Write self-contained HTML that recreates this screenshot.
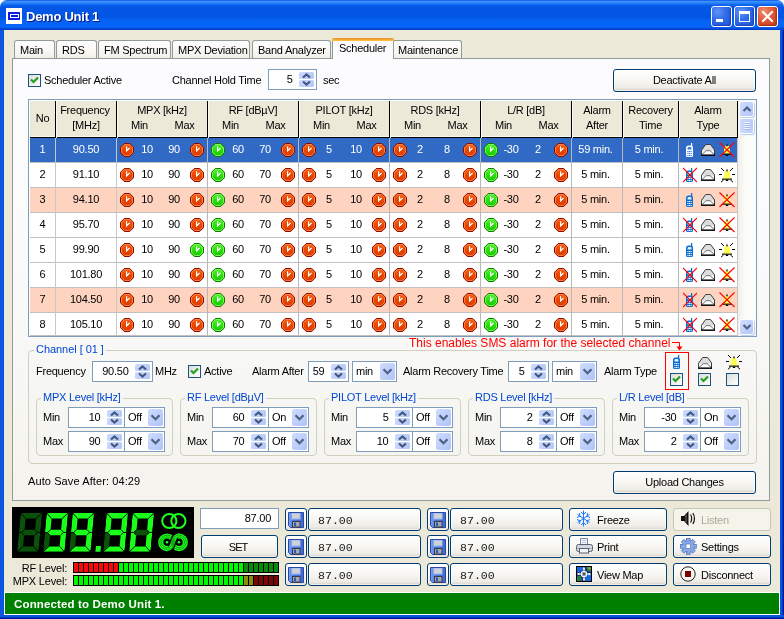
<!DOCTYPE html><html><head><meta charset="utf-8"><title>Demo Unit 1</title><style>
*{box-sizing:border-box;margin:0;padding:0}
html,body{width:784px;height:619px;overflow:hidden;background:#fff}
body{font-family:"Liberation Sans",sans-serif;font-size:11px;letter-spacing:-0.25px;color:#000}
#win{will-change:transform;position:absolute;left:0;top:0;width:784px;height:619px;overflow:hidden;border-radius:7px 7px 0 0;background:#ece9d8}
.a{position:absolute;white-space:nowrap}
#tbar{left:0;top:0;width:784px;height:30px;background:linear-gradient(180deg,#0a50e0 0,#3b92ff 5%,#2a84fa 10%,#0a60ec 17%,#0457e6 24%,#0355e4 60%,#0460f2 65%,#0666fa 88%,#0452e2 94%,#0238c8 100%)}
#tbar .ttl{left:26px;top:9px;font-size:13px;font-weight:bold;color:#fff;text-shadow:1px 1px 0 #0a1883;letter-spacing:-0.25px;line-height:16px}
.bl{left:0;top:30px;width:4px;height:589px;background:linear-gradient(90deg,#0831d9 0,#166aee 1px,#0855dd 2px,#0855dd 4px)}
.br{left:780px;top:30px;width:4px;height:589px;background:linear-gradient(90deg,#0855dd 0,#0855dd 2px,#001ea0 3px,#00138c 4px)}
.bb{left:0;top:615px;width:784px;height:4px;background:linear-gradient(180deg,#0855dd 0,#0855dd 2px,#001ea0 3px,#00138c 4px)}
.cb{top:6px;width:21px;height:21px;border:1px solid #fff;border-radius:3px;background:radial-gradient(circle at 30% 25%,#5e93f5 0,#2f6be8 45%,#2355d8 100%);box-shadow:inset -1px -1px 2px #1a3eb0}
.cb.x{background:radial-gradient(circle at 30% 25%,#f0906e 0,#e2583a 45%,#c63a17 100%);box-shadow:inset -1px -1px 2px #9c2a10}
.tab{top:40px;height:19px;border:1px solid #919b9c;border-bottom:none;border-radius:3px 3px 0 0;background:linear-gradient(180deg,#fefefe 0,#f6f5f0 70%,#ecebe3 100%);text-align:left;padding-left:5px;line-height:18px}
.tab.sel{top:38px;height:21px;background:#fcfcfe;border-top:none;line-height:21px;z-index:3;padding-left:6px}
.tab.sel:before{content:"";position:absolute;left:-1px;right:-1px;top:0;height:3px;background:linear-gradient(180deg,#e68b2c,#ffc73c);border-radius:3px 3px 0 0}
#pane{left:12px;top:58px;width:758px;height:443px;border:1px solid #919b9c;background:linear-gradient(180deg,#fcfcfe 0,#fbfbfc 40%,#f4f3ee 100%)}
.btn{border:1px solid #003c74;border-radius:3px;background:linear-gradient(180deg,#fff 0,#f7f6f1 50%,#ecebe5 85%,#d6d0c5 100%);text-align:center;box-shadow:inset 0 0 0 1px rgba(255,255,255,.6)}
.btn.dis{border-color:#c9c7ba;color:#aca899;background:#f5f4ea;box-shadow:none}
.fld{border:1px solid #7f9db9;background:#fff}
.spn{border:1px solid #7f9db9;background:#fff}
.spn .v{position:absolute;right:23.5px;top:0;line-height:19px;text-align:right}
.spn .u,.spn .d{position:absolute;right:2px;width:15px;height:7px;background:linear-gradient(135deg,#cddbfe,#b2c5f6);border-radius:1.5px}
.spn .u{top:2px}.spn .d{bottom:2px}
.cmb{border:1px solid #7f9db9;background:#fff}
.cmb .v{position:absolute;left:3px;top:0;line-height:19px}
.cmb .dd{position:absolute;right:1px;top:1px;width:15px;bottom:1px;border-radius:2px;background:linear-gradient(135deg,#cfdcfe,#afc3f6)}
.grp{border:1px solid #d0d0bf;border-radius:4px}
.gt{color:#0046d5;line-height:13px;padding:0 2px}
.chk{width:13px;height:13px;border:1px solid #1c5180;background:linear-gradient(135deg,#dcdcd7 0,#fff 100%)}
table{border-collapse:collapse}
</style></head><body><div id="win">
<div id="tbar" class="a">
<svg class="a" style="left:6px;top:8px" width="16" height="16" viewBox="0 0 16 16"><rect width="16" height="16" fill="#fff"/><rect x="2" y="4" width="12" height="8" fill="#0c1ce0"/><rect x="4.5" y="6.5" width="8" height="3" fill="none" stroke="#fff"/></svg>
<div class="a ttl">Demo Unit 1</div>
<div class="a cb" style="left:711px"><svg width="19" height="19"><rect x="4" y="12" width="7" height="3" fill="#fff"/></svg></div>
<div class="a cb" style="left:734px"><svg width="19" height="19"><rect x="4.5" y="5.5" width="10" height="9" fill="none" stroke="#fff"/><rect x="4" y="4" width="11" height="3" fill="#fff"/></svg></div>
<div class="a cb x" style="left:757px"><svg width="19" height="19"><path d="M5 5 L14 14 M14 5 L5 14" stroke="#fff" stroke-width="2.2" stroke-linecap="round"/></svg></div>
</div>
<div class="a bl"></div><div class="a br"></div><div class="a bb"></div>
<div class="a tab" style="left:14px;width:41px">Main</div>
<div class="a tab" style="left:56px;width:41px">RDS</div>
<div class="a tab" style="left:98px;width:73px">FM Spectrum</div>
<div class="a tab" style="left:172px;width:78px">MPX Deviation</div>
<div class="a tab" style="left:252px;width:79px">Band Analyzer</div>
<div class="a tab sel" style="left:332px;width:62px">Scheduler</div>
<div class="a tab" style="left:392px;width:70px">Maintenance</div>
<div id="pane" class="a"></div>
<div class="a chk" style="left:28px;top:74px"><svg width="11" height="11" style="display:block"><path d="M2 4.5 L4.5 7 L9 2.5" fill="none" stroke="#21a121" stroke-width="2.2"/></svg></div>
<div class="a" style="left:44px;top:74px;line-height:13px;">Scheduler Active</div>
<div class="a" style="left:172px;top:74px;line-height:13px;">Channel Hold Time</div>
<div class="a spn" style="left:268px;top:69px;width:49px;height:21px"><div class="v">5</div><div class="u"><svg width="15" height="7" style="display:block"><path d="M4 5.6 L7.5 2.4 L11 5.6" fill="none" stroke="#43577c" stroke-width="2.1"/></svg></div><div class="d"><svg width="15" height="7" style="display:block"><path d="M4 1.4 L7.5 4.6 L11 1.4" fill="none" stroke="#43577c" stroke-width="2.1"/></svg></div></div>
<div class="a" style="left:323px;top:74px;line-height:13px;">sec</div>
<div class="a btn" style="left:613px;top:69px;width:143px;height:23px;line-height:21px">Deactivate All</div>
<div class="a" style="left:28px;top:99px;width:729px;height:238px;border:1px solid #7f9db9;background:#fff"></div>
<div class="a" style="left:30px;top:101px;width:708px;height:37px;background:#ece9d8;border-bottom:1px solid #000;box-shadow:inset 0 -1px 0 #fbfaf0"></div>
<div class="a" style="left:55px;top:101px;width:2px;height:37px;background:#000;border-right:1px solid #fbfaf0"></div>
<div class="a" style="left:116px;top:101px;width:2px;height:37px;background:#000;border-right:1px solid #fbfaf0"></div>
<div class="a" style="left:207px;top:101px;width:2px;height:37px;background:#000;border-right:1px solid #fbfaf0"></div>
<div class="a" style="left:298px;top:101px;width:2px;height:37px;background:#000;border-right:1px solid #fbfaf0"></div>
<div class="a" style="left:389px;top:101px;width:2px;height:37px;background:#000;border-right:1px solid #fbfaf0"></div>
<div class="a" style="left:480px;top:101px;width:2px;height:37px;background:#000;border-right:1px solid #fbfaf0"></div>
<div class="a" style="left:571px;top:101px;width:2px;height:37px;background:#000;border-right:1px solid #fbfaf0"></div>
<div class="a" style="left:622px;top:101px;width:2px;height:37px;background:#000;border-right:1px solid #fbfaf0"></div>
<div class="a" style="left:678px;top:101px;width:2px;height:37px;background:#000;border-right:1px solid #fbfaf0"></div>
<div class="a" style="left:737px;top:101px;width:2px;height:37px;background:#000;border-right:1px solid #fbfaf0"></div>
<div class="a" style="left:30px;top:112px;width:25px;text-align:center;line-height:13px">No</div>
<div class="a" style="left:55px;top:104px;width:60px;text-align:center;line-height:13px">Frequency</div>
<div class="a" style="left:56px;top:119px;width:60px;text-align:center;line-height:13px">[MHz]</div>
<div class="a" style="left:117px;top:104px;width:90px;text-align:center;line-height:13px">MPX [kHz]</div>
<div class="a" style="left:117px;top:119px;width:45px;text-align:center;line-height:13px">Min</div>
<div class="a" style="left:162px;top:119px;width:45px;text-align:center;line-height:13px">Max</div>
<div class="a" style="left:208px;top:104px;width:90px;text-align:center;line-height:13px">RF [dBµV]</div>
<div class="a" style="left:208px;top:119px;width:45px;text-align:center;line-height:13px">Min</div>
<div class="a" style="left:253px;top:119px;width:45px;text-align:center;line-height:13px">Max</div>
<div class="a" style="left:299px;top:104px;width:90px;text-align:center;line-height:13px">PILOT [kHz]</div>
<div class="a" style="left:299px;top:119px;width:45px;text-align:center;line-height:13px">Min</div>
<div class="a" style="left:344px;top:119px;width:45px;text-align:center;line-height:13px">Max</div>
<div class="a" style="left:390px;top:104px;width:90px;text-align:center;line-height:13px">RDS [kHz]</div>
<div class="a" style="left:390px;top:119px;width:45px;text-align:center;line-height:13px">Min</div>
<div class="a" style="left:435px;top:119px;width:45px;text-align:center;line-height:13px">Max</div>
<div class="a" style="left:481px;top:104px;width:90px;text-align:center;line-height:13px">L/R [dB]</div>
<div class="a" style="left:481px;top:119px;width:45px;text-align:center;line-height:13px">Min</div>
<div class="a" style="left:526px;top:119px;width:45px;text-align:center;line-height:13px">Max</div>
<div class="a" style="left:572px;top:104px;width:50px;text-align:center;line-height:13px">Alarm</div>
<div class="a" style="left:572px;top:119px;width:50px;text-align:center;line-height:13px">After</div>
<div class="a" style="left:623px;top:104px;width:55px;text-align:center;line-height:13px">Recovery</div>
<div class="a" style="left:623px;top:119px;width:55px;text-align:center;line-height:13px">Time</div>
<div class="a" style="left:679px;top:104px;width:58px;text-align:center;line-height:13px">Alarm</div>
<div class="a" style="left:679px;top:119px;width:58px;text-align:center;line-height:13px">Type</div>
<svg width="0" height="0" style="position:absolute"><defs><linearGradient id="g" x1="0" y1="0" x2="0" y2="1"><stop offset="0" stop-color="#52f030"/><stop offset=".5" stop-color="#2ce010"/><stop offset="1" stop-color="#18c000"/></linearGradient><linearGradient id="r" x1="0" y1="0" x2="0" y2="1"><stop offset="0" stop-color="#f86018"/><stop offset=".5" stop-color="#e84800"/><stop offset="1" stop-color="#d83800"/></linearGradient></defs></svg>
<div class="a" style="left:30px;top:138px;width:708px;height:25px;background:#316ac5;border-bottom:1px solid #c0c0c0"></div>
<div class="a" style="left:30px;top:143px;width:25px;text-align:center;line-height:13px;color:#fff">1</div>
<div class="a" style="left:56px;top:143px;width:60px;text-align:center;line-height:13px;color:#fff">90.50</div>
<svg class="a" style="left:120px;top:143px" width="14" height="14" viewBox="0 0 14 14"><path d="M4.3 0.5 H9.7 L13.5 4.3 V9.7 L9.7 13.5 H4.3 L0.5 9.7 V4.3 Z" fill="url(#r)" stroke="#8b0a00" stroke-width="1"/><path d="M4.7 1.5 H9.3 L12.5 4.7 V9.3 L9.3 12.5 H4.7 L1.5 9.3 V4.7 Z" fill="none" stroke="#ff8a48" stroke-width="1" opacity=".85"/><path d="M6.6 3.2 V7.8 L9.6 5" fill="none" stroke="#fff" stroke-width="1.2"/></svg>
<div class="a" style="left:133px;top:143px;width:28px;text-align:center;line-height:13px;color:#fff">10</div>
<div class="a" style="left:161px;top:143px;width:26px;text-align:center;line-height:13px;color:#fff">90</div>
<svg class="a" style="left:190px;top:143px" width="14" height="14" viewBox="0 0 14 14"><path d="M4.3 0.5 H9.7 L13.5 4.3 V9.7 L9.7 13.5 H4.3 L0.5 9.7 V4.3 Z" fill="url(#r)" stroke="#8b0a00" stroke-width="1"/><path d="M4.7 1.5 H9.3 L12.5 4.7 V9.3 L9.3 12.5 H4.7 L1.5 9.3 V4.7 Z" fill="none" stroke="#ff8a48" stroke-width="1" opacity=".85"/><path d="M6.6 3.2 V7.8 L9.6 5" fill="none" stroke="#fff" stroke-width="1.2"/></svg>
<svg class="a" style="left:211px;top:143px" width="14" height="14" viewBox="0 0 14 14"><path d="M4.3 0.5 H9.7 L13.5 4.3 V9.7 L9.7 13.5 H4.3 L0.5 9.7 V4.3 Z" fill="url(#g)" stroke="#0e7a00" stroke-width="1"/><path d="M4.7 1.5 H9.3 L12.5 4.7 V9.3 L9.3 12.5 H4.7 L1.5 9.3 V4.7 Z" fill="none" stroke="#8aff5c" stroke-width="1" opacity=".85"/><path d="M6.6 3.2 V7.8 L9.6 5" fill="none" stroke="#fff" stroke-width="1.2"/></svg>
<div class="a" style="left:224px;top:143px;width:28px;text-align:center;line-height:13px;color:#fff">60</div>
<div class="a" style="left:252px;top:143px;width:26px;text-align:center;line-height:13px;color:#fff">70</div>
<svg class="a" style="left:281px;top:143px" width="14" height="14" viewBox="0 0 14 14"><path d="M4.3 0.5 H9.7 L13.5 4.3 V9.7 L9.7 13.5 H4.3 L0.5 9.7 V4.3 Z" fill="url(#r)" stroke="#8b0a00" stroke-width="1"/><path d="M4.7 1.5 H9.3 L12.5 4.7 V9.3 L9.3 12.5 H4.7 L1.5 9.3 V4.7 Z" fill="none" stroke="#ff8a48" stroke-width="1" opacity=".85"/><path d="M6.6 3.2 V7.8 L9.6 5" fill="none" stroke="#fff" stroke-width="1.2"/></svg>
<svg class="a" style="left:302px;top:143px" width="14" height="14" viewBox="0 0 14 14"><path d="M4.3 0.5 H9.7 L13.5 4.3 V9.7 L9.7 13.5 H4.3 L0.5 9.7 V4.3 Z" fill="url(#r)" stroke="#8b0a00" stroke-width="1"/><path d="M4.7 1.5 H9.3 L12.5 4.7 V9.3 L9.3 12.5 H4.7 L1.5 9.3 V4.7 Z" fill="none" stroke="#ff8a48" stroke-width="1" opacity=".85"/><path d="M6.6 3.2 V7.8 L9.6 5" fill="none" stroke="#fff" stroke-width="1.2"/></svg>
<div class="a" style="left:315px;top:143px;width:28px;text-align:center;line-height:13px;color:#fff">5</div>
<div class="a" style="left:343px;top:143px;width:26px;text-align:center;line-height:13px;color:#fff">10</div>
<svg class="a" style="left:372px;top:143px" width="14" height="14" viewBox="0 0 14 14"><path d="M4.3 0.5 H9.7 L13.5 4.3 V9.7 L9.7 13.5 H4.3 L0.5 9.7 V4.3 Z" fill="url(#r)" stroke="#8b0a00" stroke-width="1"/><path d="M4.7 1.5 H9.3 L12.5 4.7 V9.3 L9.3 12.5 H4.7 L1.5 9.3 V4.7 Z" fill="none" stroke="#ff8a48" stroke-width="1" opacity=".85"/><path d="M6.6 3.2 V7.8 L9.6 5" fill="none" stroke="#fff" stroke-width="1.2"/></svg>
<svg class="a" style="left:393px;top:143px" width="14" height="14" viewBox="0 0 14 14"><path d="M4.3 0.5 H9.7 L13.5 4.3 V9.7 L9.7 13.5 H4.3 L0.5 9.7 V4.3 Z" fill="url(#r)" stroke="#8b0a00" stroke-width="1"/><path d="M4.7 1.5 H9.3 L12.5 4.7 V9.3 L9.3 12.5 H4.7 L1.5 9.3 V4.7 Z" fill="none" stroke="#ff8a48" stroke-width="1" opacity=".85"/><path d="M6.6 3.2 V7.8 L9.6 5" fill="none" stroke="#fff" stroke-width="1.2"/></svg>
<div class="a" style="left:406px;top:143px;width:28px;text-align:center;line-height:13px;color:#fff">2</div>
<div class="a" style="left:434px;top:143px;width:26px;text-align:center;line-height:13px;color:#fff">8</div>
<svg class="a" style="left:463px;top:143px" width="14" height="14" viewBox="0 0 14 14"><path d="M4.3 0.5 H9.7 L13.5 4.3 V9.7 L9.7 13.5 H4.3 L0.5 9.7 V4.3 Z" fill="url(#r)" stroke="#8b0a00" stroke-width="1"/><path d="M4.7 1.5 H9.3 L12.5 4.7 V9.3 L9.3 12.5 H4.7 L1.5 9.3 V4.7 Z" fill="none" stroke="#ff8a48" stroke-width="1" opacity=".85"/><path d="M6.6 3.2 V7.8 L9.6 5" fill="none" stroke="#fff" stroke-width="1.2"/></svg>
<svg class="a" style="left:484px;top:143px" width="14" height="14" viewBox="0 0 14 14"><path d="M4.3 0.5 H9.7 L13.5 4.3 V9.7 L9.7 13.5 H4.3 L0.5 9.7 V4.3 Z" fill="url(#g)" stroke="#0e7a00" stroke-width="1"/><path d="M4.7 1.5 H9.3 L12.5 4.7 V9.3 L9.3 12.5 H4.7 L1.5 9.3 V4.7 Z" fill="none" stroke="#8aff5c" stroke-width="1" opacity=".85"/><path d="M6.6 3.2 V7.8 L9.6 5" fill="none" stroke="#fff" stroke-width="1.2"/></svg>
<div class="a" style="left:497px;top:143px;width:28px;text-align:center;line-height:13px;color:#fff">-30</div>
<div class="a" style="left:525px;top:143px;width:26px;text-align:center;line-height:13px;color:#fff">2</div>
<svg class="a" style="left:554px;top:143px" width="14" height="14" viewBox="0 0 14 14"><path d="M4.3 0.5 H9.7 L13.5 4.3 V9.7 L9.7 13.5 H4.3 L0.5 9.7 V4.3 Z" fill="url(#r)" stroke="#8b0a00" stroke-width="1"/><path d="M4.7 1.5 H9.3 L12.5 4.7 V9.3 L9.3 12.5 H4.7 L1.5 9.3 V4.7 Z" fill="none" stroke="#ff8a48" stroke-width="1" opacity=".85"/><path d="M6.6 3.2 V7.8 L9.6 5" fill="none" stroke="#fff" stroke-width="1.2"/></svg>
<div class="a" style="left:570px;top:143px;width:51px;text-align:center;line-height:13px;color:#fff">59 min.</div>
<div class="a" style="left:621px;top:143px;width:56px;text-align:center;line-height:13px;color:#fff">5 min.</div>
<svg class="a" style="left:683px;top:142px" width="14" height="16" viewBox="0 0 14 16"><rect x="8" y="1" width="1.2" height="4" fill="#ffffff"/><path d="M3 6 Q3 3.5 5.5 3.5 H7.5 Q10 3.5 10 6 V13.5 Q10 15 8.5 15 H4.5 Q3 15 3 13.5 Z" fill="#ffffff"/><path d="M4.5 7.6 V6.4 Q4.5 5 5.8 5 H7.2 Q8.5 5 8.5 6.4 V7.6 Z" fill="#2a7ae0" opacity=".92"/><g fill="#2a7ae0"><rect x="4.4" y="9" width="1.1" height="1.1"/><rect x="6" y="9" width="1.1" height="1.1"/><rect x="7.6" y="9" width="1.1" height="1.1"/><rect x="4.4" y="11" width="1.1" height="1.1"/><rect x="6" y="11" width="1.1" height="1.1"/><rect x="7.6" y="11" width="1.1" height="1.1"/><rect x="4.4" y="13" width="1.1" height="1.1"/><rect x="6" y="13" width="1.1" height="1.1"/><rect x="7.6" y="13" width="1.1" height="1.1"/></g></svg>
<svg class="a" style="left:701px;top:144px" width="14.3" height="12.4" viewBox="0 0 15 13"><path d="M0.5 11.5 V6.5 L5 0.5 H10 L14.5 6.5 V11.5 Z" fill="#dcdcdc" stroke="#333" stroke-width="1"/><path d="M1 11.5 V7 L5 7.2 L7.5 6.2 L10 7.2 L14 7 V11.5 Z" fill="#fff"/><path d="M1 11 L5.5 7 H9.5 L14 11" fill="none" stroke="#555" stroke-width=".9"/><path d="M0 11.7 H15" stroke="#000" stroke-width="1.5"/><path d="M14.5 6.5 V12" stroke="#000" stroke-width="1"/></svg>
<svg class="a" style="left:719px;top:142px" width="16" height="16" viewBox="0 0 16 16"><path d="M8 3.6 C5.6 3.6 5.2 5.6 5.2 7.6 C5.2 9.6 4.7 10.6 3.5 11.7 H12.5 C11.3 10.6 10.8 9.6 10.8 7.6 C10.8 5.6 10.4 3.6 8 3.6 Z" fill="#ffff50"/><rect x="7.4" y="2.4" width="1.2" height="2" fill="#000"/><rect x="3" y="11.6" width="10" height="1.1" fill="#000"/><rect x="6.8" y="12.7" width="2.4" height="1.3" fill="#000"/><path d="M0.5 0.5 L15.5 15 M15.5 0.5 L0.5 15" stroke="#f00" stroke-width="1.1"/></svg>
<div class="a" style="left:30px;top:163px;width:708px;height:25px;background:#fff;border-bottom:1px solid #c0c0c0"></div>
<div class="a" style="left:30px;top:168px;width:25px;text-align:center;line-height:13px;color:#000">2</div>
<div class="a" style="left:56px;top:168px;width:60px;text-align:center;line-height:13px;color:#000">91.10</div>
<svg class="a" style="left:120px;top:168px" width="14" height="14" viewBox="0 0 14 14"><path d="M4.3 0.5 H9.7 L13.5 4.3 V9.7 L9.7 13.5 H4.3 L0.5 9.7 V4.3 Z" fill="url(#r)" stroke="#8b0a00" stroke-width="1"/><path d="M4.7 1.5 H9.3 L12.5 4.7 V9.3 L9.3 12.5 H4.7 L1.5 9.3 V4.7 Z" fill="none" stroke="#ff8a48" stroke-width="1" opacity=".85"/><path d="M6.6 3.2 V7.8 L9.6 5" fill="none" stroke="#fff" stroke-width="1.2"/></svg>
<div class="a" style="left:133px;top:168px;width:28px;text-align:center;line-height:13px;color:#000">10</div>
<div class="a" style="left:161px;top:168px;width:26px;text-align:center;line-height:13px;color:#000">90</div>
<svg class="a" style="left:190px;top:168px" width="14" height="14" viewBox="0 0 14 14"><path d="M4.3 0.5 H9.7 L13.5 4.3 V9.7 L9.7 13.5 H4.3 L0.5 9.7 V4.3 Z" fill="url(#r)" stroke="#8b0a00" stroke-width="1"/><path d="M4.7 1.5 H9.3 L12.5 4.7 V9.3 L9.3 12.5 H4.7 L1.5 9.3 V4.7 Z" fill="none" stroke="#ff8a48" stroke-width="1" opacity=".85"/><path d="M6.6 3.2 V7.8 L9.6 5" fill="none" stroke="#fff" stroke-width="1.2"/></svg>
<svg class="a" style="left:211px;top:168px" width="14" height="14" viewBox="0 0 14 14"><path d="M4.3 0.5 H9.7 L13.5 4.3 V9.7 L9.7 13.5 H4.3 L0.5 9.7 V4.3 Z" fill="url(#g)" stroke="#0e7a00" stroke-width="1"/><path d="M4.7 1.5 H9.3 L12.5 4.7 V9.3 L9.3 12.5 H4.7 L1.5 9.3 V4.7 Z" fill="none" stroke="#8aff5c" stroke-width="1" opacity=".85"/><path d="M6.6 3.2 V7.8 L9.6 5" fill="none" stroke="#fff" stroke-width="1.2"/></svg>
<div class="a" style="left:224px;top:168px;width:28px;text-align:center;line-height:13px;color:#000">60</div>
<div class="a" style="left:252px;top:168px;width:26px;text-align:center;line-height:13px;color:#000">70</div>
<svg class="a" style="left:281px;top:168px" width="14" height="14" viewBox="0 0 14 14"><path d="M4.3 0.5 H9.7 L13.5 4.3 V9.7 L9.7 13.5 H4.3 L0.5 9.7 V4.3 Z" fill="url(#r)" stroke="#8b0a00" stroke-width="1"/><path d="M4.7 1.5 H9.3 L12.5 4.7 V9.3 L9.3 12.5 H4.7 L1.5 9.3 V4.7 Z" fill="none" stroke="#ff8a48" stroke-width="1" opacity=".85"/><path d="M6.6 3.2 V7.8 L9.6 5" fill="none" stroke="#fff" stroke-width="1.2"/></svg>
<svg class="a" style="left:302px;top:168px" width="14" height="14" viewBox="0 0 14 14"><path d="M4.3 0.5 H9.7 L13.5 4.3 V9.7 L9.7 13.5 H4.3 L0.5 9.7 V4.3 Z" fill="url(#r)" stroke="#8b0a00" stroke-width="1"/><path d="M4.7 1.5 H9.3 L12.5 4.7 V9.3 L9.3 12.5 H4.7 L1.5 9.3 V4.7 Z" fill="none" stroke="#ff8a48" stroke-width="1" opacity=".85"/><path d="M6.6 3.2 V7.8 L9.6 5" fill="none" stroke="#fff" stroke-width="1.2"/></svg>
<div class="a" style="left:315px;top:168px;width:28px;text-align:center;line-height:13px;color:#000">5</div>
<div class="a" style="left:343px;top:168px;width:26px;text-align:center;line-height:13px;color:#000">10</div>
<svg class="a" style="left:372px;top:168px" width="14" height="14" viewBox="0 0 14 14"><path d="M4.3 0.5 H9.7 L13.5 4.3 V9.7 L9.7 13.5 H4.3 L0.5 9.7 V4.3 Z" fill="url(#r)" stroke="#8b0a00" stroke-width="1"/><path d="M4.7 1.5 H9.3 L12.5 4.7 V9.3 L9.3 12.5 H4.7 L1.5 9.3 V4.7 Z" fill="none" stroke="#ff8a48" stroke-width="1" opacity=".85"/><path d="M6.6 3.2 V7.8 L9.6 5" fill="none" stroke="#fff" stroke-width="1.2"/></svg>
<svg class="a" style="left:393px;top:168px" width="14" height="14" viewBox="0 0 14 14"><path d="M4.3 0.5 H9.7 L13.5 4.3 V9.7 L9.7 13.5 H4.3 L0.5 9.7 V4.3 Z" fill="url(#r)" stroke="#8b0a00" stroke-width="1"/><path d="M4.7 1.5 H9.3 L12.5 4.7 V9.3 L9.3 12.5 H4.7 L1.5 9.3 V4.7 Z" fill="none" stroke="#ff8a48" stroke-width="1" opacity=".85"/><path d="M6.6 3.2 V7.8 L9.6 5" fill="none" stroke="#fff" stroke-width="1.2"/></svg>
<div class="a" style="left:406px;top:168px;width:28px;text-align:center;line-height:13px;color:#000">2</div>
<div class="a" style="left:434px;top:168px;width:26px;text-align:center;line-height:13px;color:#000">8</div>
<svg class="a" style="left:463px;top:168px" width="14" height="14" viewBox="0 0 14 14"><path d="M4.3 0.5 H9.7 L13.5 4.3 V9.7 L9.7 13.5 H4.3 L0.5 9.7 V4.3 Z" fill="url(#r)" stroke="#8b0a00" stroke-width="1"/><path d="M4.7 1.5 H9.3 L12.5 4.7 V9.3 L9.3 12.5 H4.7 L1.5 9.3 V4.7 Z" fill="none" stroke="#ff8a48" stroke-width="1" opacity=".85"/><path d="M6.6 3.2 V7.8 L9.6 5" fill="none" stroke="#fff" stroke-width="1.2"/></svg>
<svg class="a" style="left:484px;top:168px" width="14" height="14" viewBox="0 0 14 14"><path d="M4.3 0.5 H9.7 L13.5 4.3 V9.7 L9.7 13.5 H4.3 L0.5 9.7 V4.3 Z" fill="url(#g)" stroke="#0e7a00" stroke-width="1"/><path d="M4.7 1.5 H9.3 L12.5 4.7 V9.3 L9.3 12.5 H4.7 L1.5 9.3 V4.7 Z" fill="none" stroke="#8aff5c" stroke-width="1" opacity=".85"/><path d="M6.6 3.2 V7.8 L9.6 5" fill="none" stroke="#fff" stroke-width="1.2"/></svg>
<div class="a" style="left:497px;top:168px;width:28px;text-align:center;line-height:13px;color:#000">-30</div>
<div class="a" style="left:525px;top:168px;width:26px;text-align:center;line-height:13px;color:#000">2</div>
<svg class="a" style="left:554px;top:168px" width="14" height="14" viewBox="0 0 14 14"><path d="M4.3 0.5 H9.7 L13.5 4.3 V9.7 L9.7 13.5 H4.3 L0.5 9.7 V4.3 Z" fill="url(#r)" stroke="#8b0a00" stroke-width="1"/><path d="M4.7 1.5 H9.3 L12.5 4.7 V9.3 L9.3 12.5 H4.7 L1.5 9.3 V4.7 Z" fill="none" stroke="#ff8a48" stroke-width="1" opacity=".85"/><path d="M6.6 3.2 V7.8 L9.6 5" fill="none" stroke="#fff" stroke-width="1.2"/></svg>
<div class="a" style="left:570px;top:168px;width:51px;text-align:center;line-height:13px;color:#000">5 min.</div>
<div class="a" style="left:621px;top:168px;width:56px;text-align:center;line-height:13px;color:#000">5 min.</div>
<svg class="a" style="left:683px;top:167px" width="14" height="16" viewBox="0 0 14 16"><rect x="8" y="1" width="1.2" height="4" fill="#0a6cd0"/><path d="M3 6 Q3 3.5 5.5 3.5 H7.5 Q10 3.5 10 6 V13.5 Q10 15 8.5 15 H4.5 Q3 15 3 13.5 Z" fill="#0a6cd0"/><path d="M4.5 7.6 V6.4 Q4.5 5 5.8 5 H7.2 Q8.5 5 8.5 6.4 V7.6 Z" fill="#fff" opacity=".92"/><g fill="#fff"><rect x="4.4" y="9" width="1.1" height="1.1"/><rect x="6" y="9" width="1.1" height="1.1"/><rect x="7.6" y="9" width="1.1" height="1.1"/><rect x="4.4" y="11" width="1.1" height="1.1"/><rect x="6" y="11" width="1.1" height="1.1"/><rect x="7.6" y="11" width="1.1" height="1.1"/><rect x="4.4" y="13" width="1.1" height="1.1"/><rect x="6" y="13" width="1.1" height="1.1"/><rect x="7.6" y="13" width="1.1" height="1.1"/></g><path d="M0 1 L14 15 M14 1 L0 15" stroke="#f00" stroke-width="1.1"/></svg>
<svg class="a" style="left:701px;top:169px" width="14.3" height="12.4" viewBox="0 0 15 13"><path d="M0.5 11.5 V6.5 L5 0.5 H10 L14.5 6.5 V11.5 Z" fill="#dcdcdc" stroke="#333" stroke-width="1"/><path d="M1 11.5 V7 L5 7.2 L7.5 6.2 L10 7.2 L14 7 V11.5 Z" fill="#fff"/><path d="M1 11 L5.5 7 H9.5 L14 11" fill="none" stroke="#555" stroke-width=".9"/><path d="M0 11.7 H15" stroke="#000" stroke-width="1.5"/><path d="M14.5 6.5 V12" stroke="#000" stroke-width="1"/></svg>
<svg class="a" style="left:719px;top:167px" width="16" height="16" viewBox="0 0 16 16"><path d="M2 1 L5 4 M14 1 L11 4 M0 7.5 H3 M13 7.5 H16 M2 15.2 L4.6 12.9 M14 15.2 L11.4 12.9" stroke="#000" stroke-width="1"/><path d="M8 3.6 C5.6 3.6 5.2 5.6 5.2 7.6 C5.2 9.6 4.7 10.6 3.5 11.7 H12.5 C11.3 10.6 10.8 9.6 10.8 7.6 C10.8 5.6 10.4 3.6 8 3.6 Z" fill="#ffff50"/><rect x="7.4" y="2.4" width="1.2" height="2" fill="#000"/><rect x="3" y="11.6" width="10" height="1.1" fill="#000"/><rect x="6.8" y="12.7" width="2.4" height="1.3" fill="#000"/></svg>
<div class="a" style="left:30px;top:188px;width:708px;height:25px;background:#fed3bf;border-bottom:1px solid #c0c0c0"></div>
<div class="a" style="left:30px;top:193px;width:25px;text-align:center;line-height:13px;color:#000">3</div>
<div class="a" style="left:56px;top:193px;width:60px;text-align:center;line-height:13px;color:#000">94.10</div>
<svg class="a" style="left:120px;top:193px" width="14" height="14" viewBox="0 0 14 14"><path d="M4.3 0.5 H9.7 L13.5 4.3 V9.7 L9.7 13.5 H4.3 L0.5 9.7 V4.3 Z" fill="url(#r)" stroke="#8b0a00" stroke-width="1"/><path d="M4.7 1.5 H9.3 L12.5 4.7 V9.3 L9.3 12.5 H4.7 L1.5 9.3 V4.7 Z" fill="none" stroke="#ff8a48" stroke-width="1" opacity=".85"/><path d="M6.6 3.2 V7.8 L9.6 5" fill="none" stroke="#fff" stroke-width="1.2"/></svg>
<div class="a" style="left:133px;top:193px;width:28px;text-align:center;line-height:13px;color:#000">10</div>
<div class="a" style="left:161px;top:193px;width:26px;text-align:center;line-height:13px;color:#000">90</div>
<svg class="a" style="left:190px;top:193px" width="14" height="14" viewBox="0 0 14 14"><path d="M4.3 0.5 H9.7 L13.5 4.3 V9.7 L9.7 13.5 H4.3 L0.5 9.7 V4.3 Z" fill="url(#r)" stroke="#8b0a00" stroke-width="1"/><path d="M4.7 1.5 H9.3 L12.5 4.7 V9.3 L9.3 12.5 H4.7 L1.5 9.3 V4.7 Z" fill="none" stroke="#ff8a48" stroke-width="1" opacity=".85"/><path d="M6.6 3.2 V7.8 L9.6 5" fill="none" stroke="#fff" stroke-width="1.2"/></svg>
<svg class="a" style="left:211px;top:193px" width="14" height="14" viewBox="0 0 14 14"><path d="M4.3 0.5 H9.7 L13.5 4.3 V9.7 L9.7 13.5 H4.3 L0.5 9.7 V4.3 Z" fill="url(#g)" stroke="#0e7a00" stroke-width="1"/><path d="M4.7 1.5 H9.3 L12.5 4.7 V9.3 L9.3 12.5 H4.7 L1.5 9.3 V4.7 Z" fill="none" stroke="#8aff5c" stroke-width="1" opacity=".85"/><path d="M6.6 3.2 V7.8 L9.6 5" fill="none" stroke="#fff" stroke-width="1.2"/></svg>
<div class="a" style="left:224px;top:193px;width:28px;text-align:center;line-height:13px;color:#000">60</div>
<div class="a" style="left:252px;top:193px;width:26px;text-align:center;line-height:13px;color:#000">70</div>
<svg class="a" style="left:281px;top:193px" width="14" height="14" viewBox="0 0 14 14"><path d="M4.3 0.5 H9.7 L13.5 4.3 V9.7 L9.7 13.5 H4.3 L0.5 9.7 V4.3 Z" fill="url(#r)" stroke="#8b0a00" stroke-width="1"/><path d="M4.7 1.5 H9.3 L12.5 4.7 V9.3 L9.3 12.5 H4.7 L1.5 9.3 V4.7 Z" fill="none" stroke="#ff8a48" stroke-width="1" opacity=".85"/><path d="M6.6 3.2 V7.8 L9.6 5" fill="none" stroke="#fff" stroke-width="1.2"/></svg>
<svg class="a" style="left:302px;top:193px" width="14" height="14" viewBox="0 0 14 14"><path d="M4.3 0.5 H9.7 L13.5 4.3 V9.7 L9.7 13.5 H4.3 L0.5 9.7 V4.3 Z" fill="url(#r)" stroke="#8b0a00" stroke-width="1"/><path d="M4.7 1.5 H9.3 L12.5 4.7 V9.3 L9.3 12.5 H4.7 L1.5 9.3 V4.7 Z" fill="none" stroke="#ff8a48" stroke-width="1" opacity=".85"/><path d="M6.6 3.2 V7.8 L9.6 5" fill="none" stroke="#fff" stroke-width="1.2"/></svg>
<div class="a" style="left:315px;top:193px;width:28px;text-align:center;line-height:13px;color:#000">5</div>
<div class="a" style="left:343px;top:193px;width:26px;text-align:center;line-height:13px;color:#000">10</div>
<svg class="a" style="left:372px;top:193px" width="14" height="14" viewBox="0 0 14 14"><path d="M4.3 0.5 H9.7 L13.5 4.3 V9.7 L9.7 13.5 H4.3 L0.5 9.7 V4.3 Z" fill="url(#r)" stroke="#8b0a00" stroke-width="1"/><path d="M4.7 1.5 H9.3 L12.5 4.7 V9.3 L9.3 12.5 H4.7 L1.5 9.3 V4.7 Z" fill="none" stroke="#ff8a48" stroke-width="1" opacity=".85"/><path d="M6.6 3.2 V7.8 L9.6 5" fill="none" stroke="#fff" stroke-width="1.2"/></svg>
<svg class="a" style="left:393px;top:193px" width="14" height="14" viewBox="0 0 14 14"><path d="M4.3 0.5 H9.7 L13.5 4.3 V9.7 L9.7 13.5 H4.3 L0.5 9.7 V4.3 Z" fill="url(#r)" stroke="#8b0a00" stroke-width="1"/><path d="M4.7 1.5 H9.3 L12.5 4.7 V9.3 L9.3 12.5 H4.7 L1.5 9.3 V4.7 Z" fill="none" stroke="#ff8a48" stroke-width="1" opacity=".85"/><path d="M6.6 3.2 V7.8 L9.6 5" fill="none" stroke="#fff" stroke-width="1.2"/></svg>
<div class="a" style="left:406px;top:193px;width:28px;text-align:center;line-height:13px;color:#000">2</div>
<div class="a" style="left:434px;top:193px;width:26px;text-align:center;line-height:13px;color:#000">8</div>
<svg class="a" style="left:463px;top:193px" width="14" height="14" viewBox="0 0 14 14"><path d="M4.3 0.5 H9.7 L13.5 4.3 V9.7 L9.7 13.5 H4.3 L0.5 9.7 V4.3 Z" fill="url(#r)" stroke="#8b0a00" stroke-width="1"/><path d="M4.7 1.5 H9.3 L12.5 4.7 V9.3 L9.3 12.5 H4.7 L1.5 9.3 V4.7 Z" fill="none" stroke="#ff8a48" stroke-width="1" opacity=".85"/><path d="M6.6 3.2 V7.8 L9.6 5" fill="none" stroke="#fff" stroke-width="1.2"/></svg>
<svg class="a" style="left:484px;top:193px" width="14" height="14" viewBox="0 0 14 14"><path d="M4.3 0.5 H9.7 L13.5 4.3 V9.7 L9.7 13.5 H4.3 L0.5 9.7 V4.3 Z" fill="url(#g)" stroke="#0e7a00" stroke-width="1"/><path d="M4.7 1.5 H9.3 L12.5 4.7 V9.3 L9.3 12.5 H4.7 L1.5 9.3 V4.7 Z" fill="none" stroke="#8aff5c" stroke-width="1" opacity=".85"/><path d="M6.6 3.2 V7.8 L9.6 5" fill="none" stroke="#fff" stroke-width="1.2"/></svg>
<div class="a" style="left:497px;top:193px;width:28px;text-align:center;line-height:13px;color:#000">-30</div>
<div class="a" style="left:525px;top:193px;width:26px;text-align:center;line-height:13px;color:#000">2</div>
<svg class="a" style="left:554px;top:193px" width="14" height="14" viewBox="0 0 14 14"><path d="M4.3 0.5 H9.7 L13.5 4.3 V9.7 L9.7 13.5 H4.3 L0.5 9.7 V4.3 Z" fill="url(#r)" stroke="#8b0a00" stroke-width="1"/><path d="M4.7 1.5 H9.3 L12.5 4.7 V9.3 L9.3 12.5 H4.7 L1.5 9.3 V4.7 Z" fill="none" stroke="#ff8a48" stroke-width="1" opacity=".85"/><path d="M6.6 3.2 V7.8 L9.6 5" fill="none" stroke="#fff" stroke-width="1.2"/></svg>
<div class="a" style="left:570px;top:193px;width:51px;text-align:center;line-height:13px;color:#000">5 min.</div>
<div class="a" style="left:621px;top:193px;width:56px;text-align:center;line-height:13px;color:#000">5 min.</div>
<svg class="a" style="left:683px;top:192px" width="14" height="16" viewBox="0 0 14 16"><rect x="8" y="1" width="1.2" height="4" fill="#0a6cd0"/><path d="M3 6 Q3 3.5 5.5 3.5 H7.5 Q10 3.5 10 6 V13.5 Q10 15 8.5 15 H4.5 Q3 15 3 13.5 Z" fill="#0a6cd0"/><path d="M4.5 7.6 V6.4 Q4.5 5 5.8 5 H7.2 Q8.5 5 8.5 6.4 V7.6 Z" fill="#fff" opacity=".92"/><g fill="#fff"><rect x="4.4" y="9" width="1.1" height="1.1"/><rect x="6" y="9" width="1.1" height="1.1"/><rect x="7.6" y="9" width="1.1" height="1.1"/><rect x="4.4" y="11" width="1.1" height="1.1"/><rect x="6" y="11" width="1.1" height="1.1"/><rect x="7.6" y="11" width="1.1" height="1.1"/><rect x="4.4" y="13" width="1.1" height="1.1"/><rect x="6" y="13" width="1.1" height="1.1"/><rect x="7.6" y="13" width="1.1" height="1.1"/></g></svg>
<svg class="a" style="left:701px;top:194px" width="14.3" height="12.4" viewBox="0 0 15 13"><path d="M0.5 11.5 V6.5 L5 0.5 H10 L14.5 6.5 V11.5 Z" fill="#dcdcdc" stroke="#333" stroke-width="1"/><path d="M1 11.5 V7 L5 7.2 L7.5 6.2 L10 7.2 L14 7 V11.5 Z" fill="#fff"/><path d="M1 11 L5.5 7 H9.5 L14 11" fill="none" stroke="#555" stroke-width=".9"/><path d="M0 11.7 H15" stroke="#000" stroke-width="1.5"/><path d="M14.5 6.5 V12" stroke="#000" stroke-width="1"/></svg>
<svg class="a" style="left:719px;top:192px" width="16" height="16" viewBox="0 0 16 16"><path d="M8 3.6 C5.6 3.6 5.2 5.6 5.2 7.6 C5.2 9.6 4.7 10.6 3.5 11.7 H12.5 C11.3 10.6 10.8 9.6 10.8 7.6 C10.8 5.6 10.4 3.6 8 3.6 Z" fill="#ffff50"/><rect x="7.4" y="2.4" width="1.2" height="2" fill="#000"/><rect x="3" y="11.6" width="10" height="1.1" fill="#000"/><rect x="6.8" y="12.7" width="2.4" height="1.3" fill="#000"/><path d="M0.5 0.5 L15.5 15 M15.5 0.5 L0.5 15" stroke="#f00" stroke-width="1.1"/></svg>
<div class="a" style="left:30px;top:213px;width:708px;height:25px;background:#fff;border-bottom:1px solid #c0c0c0"></div>
<div class="a" style="left:30px;top:218px;width:25px;text-align:center;line-height:13px;color:#000">4</div>
<div class="a" style="left:56px;top:218px;width:60px;text-align:center;line-height:13px;color:#000">95.70</div>
<svg class="a" style="left:120px;top:218px" width="14" height="14" viewBox="0 0 14 14"><path d="M4.3 0.5 H9.7 L13.5 4.3 V9.7 L9.7 13.5 H4.3 L0.5 9.7 V4.3 Z" fill="url(#r)" stroke="#8b0a00" stroke-width="1"/><path d="M4.7 1.5 H9.3 L12.5 4.7 V9.3 L9.3 12.5 H4.7 L1.5 9.3 V4.7 Z" fill="none" stroke="#ff8a48" stroke-width="1" opacity=".85"/><path d="M6.6 3.2 V7.8 L9.6 5" fill="none" stroke="#fff" stroke-width="1.2"/></svg>
<div class="a" style="left:133px;top:218px;width:28px;text-align:center;line-height:13px;color:#000">10</div>
<div class="a" style="left:161px;top:218px;width:26px;text-align:center;line-height:13px;color:#000">90</div>
<svg class="a" style="left:190px;top:218px" width="14" height="14" viewBox="0 0 14 14"><path d="M4.3 0.5 H9.7 L13.5 4.3 V9.7 L9.7 13.5 H4.3 L0.5 9.7 V4.3 Z" fill="url(#r)" stroke="#8b0a00" stroke-width="1"/><path d="M4.7 1.5 H9.3 L12.5 4.7 V9.3 L9.3 12.5 H4.7 L1.5 9.3 V4.7 Z" fill="none" stroke="#ff8a48" stroke-width="1" opacity=".85"/><path d="M6.6 3.2 V7.8 L9.6 5" fill="none" stroke="#fff" stroke-width="1.2"/></svg>
<svg class="a" style="left:211px;top:218px" width="14" height="14" viewBox="0 0 14 14"><path d="M4.3 0.5 H9.7 L13.5 4.3 V9.7 L9.7 13.5 H4.3 L0.5 9.7 V4.3 Z" fill="url(#g)" stroke="#0e7a00" stroke-width="1"/><path d="M4.7 1.5 H9.3 L12.5 4.7 V9.3 L9.3 12.5 H4.7 L1.5 9.3 V4.7 Z" fill="none" stroke="#8aff5c" stroke-width="1" opacity=".85"/><path d="M6.6 3.2 V7.8 L9.6 5" fill="none" stroke="#fff" stroke-width="1.2"/></svg>
<div class="a" style="left:224px;top:218px;width:28px;text-align:center;line-height:13px;color:#000">60</div>
<div class="a" style="left:252px;top:218px;width:26px;text-align:center;line-height:13px;color:#000">70</div>
<svg class="a" style="left:281px;top:218px" width="14" height="14" viewBox="0 0 14 14"><path d="M4.3 0.5 H9.7 L13.5 4.3 V9.7 L9.7 13.5 H4.3 L0.5 9.7 V4.3 Z" fill="url(#r)" stroke="#8b0a00" stroke-width="1"/><path d="M4.7 1.5 H9.3 L12.5 4.7 V9.3 L9.3 12.5 H4.7 L1.5 9.3 V4.7 Z" fill="none" stroke="#ff8a48" stroke-width="1" opacity=".85"/><path d="M6.6 3.2 V7.8 L9.6 5" fill="none" stroke="#fff" stroke-width="1.2"/></svg>
<svg class="a" style="left:302px;top:218px" width="14" height="14" viewBox="0 0 14 14"><path d="M4.3 0.5 H9.7 L13.5 4.3 V9.7 L9.7 13.5 H4.3 L0.5 9.7 V4.3 Z" fill="url(#r)" stroke="#8b0a00" stroke-width="1"/><path d="M4.7 1.5 H9.3 L12.5 4.7 V9.3 L9.3 12.5 H4.7 L1.5 9.3 V4.7 Z" fill="none" stroke="#ff8a48" stroke-width="1" opacity=".85"/><path d="M6.6 3.2 V7.8 L9.6 5" fill="none" stroke="#fff" stroke-width="1.2"/></svg>
<div class="a" style="left:315px;top:218px;width:28px;text-align:center;line-height:13px;color:#000">5</div>
<div class="a" style="left:343px;top:218px;width:26px;text-align:center;line-height:13px;color:#000">10</div>
<svg class="a" style="left:372px;top:218px" width="14" height="14" viewBox="0 0 14 14"><path d="M4.3 0.5 H9.7 L13.5 4.3 V9.7 L9.7 13.5 H4.3 L0.5 9.7 V4.3 Z" fill="url(#r)" stroke="#8b0a00" stroke-width="1"/><path d="M4.7 1.5 H9.3 L12.5 4.7 V9.3 L9.3 12.5 H4.7 L1.5 9.3 V4.7 Z" fill="none" stroke="#ff8a48" stroke-width="1" opacity=".85"/><path d="M6.6 3.2 V7.8 L9.6 5" fill="none" stroke="#fff" stroke-width="1.2"/></svg>
<svg class="a" style="left:393px;top:218px" width="14" height="14" viewBox="0 0 14 14"><path d="M4.3 0.5 H9.7 L13.5 4.3 V9.7 L9.7 13.5 H4.3 L0.5 9.7 V4.3 Z" fill="url(#r)" stroke="#8b0a00" stroke-width="1"/><path d="M4.7 1.5 H9.3 L12.5 4.7 V9.3 L9.3 12.5 H4.7 L1.5 9.3 V4.7 Z" fill="none" stroke="#ff8a48" stroke-width="1" opacity=".85"/><path d="M6.6 3.2 V7.8 L9.6 5" fill="none" stroke="#fff" stroke-width="1.2"/></svg>
<div class="a" style="left:406px;top:218px;width:28px;text-align:center;line-height:13px;color:#000">2</div>
<div class="a" style="left:434px;top:218px;width:26px;text-align:center;line-height:13px;color:#000">8</div>
<svg class="a" style="left:463px;top:218px" width="14" height="14" viewBox="0 0 14 14"><path d="M4.3 0.5 H9.7 L13.5 4.3 V9.7 L9.7 13.5 H4.3 L0.5 9.7 V4.3 Z" fill="url(#r)" stroke="#8b0a00" stroke-width="1"/><path d="M4.7 1.5 H9.3 L12.5 4.7 V9.3 L9.3 12.5 H4.7 L1.5 9.3 V4.7 Z" fill="none" stroke="#ff8a48" stroke-width="1" opacity=".85"/><path d="M6.6 3.2 V7.8 L9.6 5" fill="none" stroke="#fff" stroke-width="1.2"/></svg>
<svg class="a" style="left:484px;top:218px" width="14" height="14" viewBox="0 0 14 14"><path d="M4.3 0.5 H9.7 L13.5 4.3 V9.7 L9.7 13.5 H4.3 L0.5 9.7 V4.3 Z" fill="url(#g)" stroke="#0e7a00" stroke-width="1"/><path d="M4.7 1.5 H9.3 L12.5 4.7 V9.3 L9.3 12.5 H4.7 L1.5 9.3 V4.7 Z" fill="none" stroke="#8aff5c" stroke-width="1" opacity=".85"/><path d="M6.6 3.2 V7.8 L9.6 5" fill="none" stroke="#fff" stroke-width="1.2"/></svg>
<div class="a" style="left:497px;top:218px;width:28px;text-align:center;line-height:13px;color:#000">-30</div>
<div class="a" style="left:525px;top:218px;width:26px;text-align:center;line-height:13px;color:#000">2</div>
<svg class="a" style="left:554px;top:218px" width="14" height="14" viewBox="0 0 14 14"><path d="M4.3 0.5 H9.7 L13.5 4.3 V9.7 L9.7 13.5 H4.3 L0.5 9.7 V4.3 Z" fill="url(#r)" stroke="#8b0a00" stroke-width="1"/><path d="M4.7 1.5 H9.3 L12.5 4.7 V9.3 L9.3 12.5 H4.7 L1.5 9.3 V4.7 Z" fill="none" stroke="#ff8a48" stroke-width="1" opacity=".85"/><path d="M6.6 3.2 V7.8 L9.6 5" fill="none" stroke="#fff" stroke-width="1.2"/></svg>
<div class="a" style="left:570px;top:218px;width:51px;text-align:center;line-height:13px;color:#000">5 min.</div>
<div class="a" style="left:621px;top:218px;width:56px;text-align:center;line-height:13px;color:#000">5 min.</div>
<svg class="a" style="left:683px;top:217px" width="14" height="16" viewBox="0 0 14 16"><rect x="8" y="1" width="1.2" height="4" fill="#0a6cd0"/><path d="M3 6 Q3 3.5 5.5 3.5 H7.5 Q10 3.5 10 6 V13.5 Q10 15 8.5 15 H4.5 Q3 15 3 13.5 Z" fill="#0a6cd0"/><path d="M4.5 7.6 V6.4 Q4.5 5 5.8 5 H7.2 Q8.5 5 8.5 6.4 V7.6 Z" fill="#fff" opacity=".92"/><g fill="#fff"><rect x="4.4" y="9" width="1.1" height="1.1"/><rect x="6" y="9" width="1.1" height="1.1"/><rect x="7.6" y="9" width="1.1" height="1.1"/><rect x="4.4" y="11" width="1.1" height="1.1"/><rect x="6" y="11" width="1.1" height="1.1"/><rect x="7.6" y="11" width="1.1" height="1.1"/><rect x="4.4" y="13" width="1.1" height="1.1"/><rect x="6" y="13" width="1.1" height="1.1"/><rect x="7.6" y="13" width="1.1" height="1.1"/></g><path d="M0 1 L14 15 M14 1 L0 15" stroke="#f00" stroke-width="1.1"/></svg>
<svg class="a" style="left:701px;top:219px" width="14.3" height="12.4" viewBox="0 0 15 13"><path d="M0.5 11.5 V6.5 L5 0.5 H10 L14.5 6.5 V11.5 Z" fill="#dcdcdc" stroke="#333" stroke-width="1"/><path d="M1 11.5 V7 L5 7.2 L7.5 6.2 L10 7.2 L14 7 V11.5 Z" fill="#fff"/><path d="M1 11 L5.5 7 H9.5 L14 11" fill="none" stroke="#555" stroke-width=".9"/><path d="M0 11.7 H15" stroke="#000" stroke-width="1.5"/><path d="M14.5 6.5 V12" stroke="#000" stroke-width="1"/></svg>
<svg class="a" style="left:719px;top:217px" width="16" height="16" viewBox="0 0 16 16"><path d="M8 3.6 C5.6 3.6 5.2 5.6 5.2 7.6 C5.2 9.6 4.7 10.6 3.5 11.7 H12.5 C11.3 10.6 10.8 9.6 10.8 7.6 C10.8 5.6 10.4 3.6 8 3.6 Z" fill="#ffff50"/><rect x="7.4" y="2.4" width="1.2" height="2" fill="#000"/><rect x="3" y="11.6" width="10" height="1.1" fill="#000"/><rect x="6.8" y="12.7" width="2.4" height="1.3" fill="#000"/><path d="M0.5 0.5 L15.5 15 M15.5 0.5 L0.5 15" stroke="#f00" stroke-width="1.1"/></svg>
<div class="a" style="left:30px;top:238px;width:708px;height:25px;background:#fff;border-bottom:1px solid #c0c0c0"></div>
<div class="a" style="left:30px;top:243px;width:25px;text-align:center;line-height:13px;color:#000">5</div>
<div class="a" style="left:56px;top:243px;width:60px;text-align:center;line-height:13px;color:#000">99.90</div>
<svg class="a" style="left:120px;top:243px" width="14" height="14" viewBox="0 0 14 14"><path d="M4.3 0.5 H9.7 L13.5 4.3 V9.7 L9.7 13.5 H4.3 L0.5 9.7 V4.3 Z" fill="url(#r)" stroke="#8b0a00" stroke-width="1"/><path d="M4.7 1.5 H9.3 L12.5 4.7 V9.3 L9.3 12.5 H4.7 L1.5 9.3 V4.7 Z" fill="none" stroke="#ff8a48" stroke-width="1" opacity=".85"/><path d="M6.6 3.2 V7.8 L9.6 5" fill="none" stroke="#fff" stroke-width="1.2"/></svg>
<div class="a" style="left:133px;top:243px;width:28px;text-align:center;line-height:13px;color:#000">10</div>
<div class="a" style="left:161px;top:243px;width:26px;text-align:center;line-height:13px;color:#000">90</div>
<svg class="a" style="left:190px;top:243px" width="14" height="14" viewBox="0 0 14 14"><path d="M4.3 0.5 H9.7 L13.5 4.3 V9.7 L9.7 13.5 H4.3 L0.5 9.7 V4.3 Z" fill="url(#g)" stroke="#0e7a00" stroke-width="1"/><path d="M4.7 1.5 H9.3 L12.5 4.7 V9.3 L9.3 12.5 H4.7 L1.5 9.3 V4.7 Z" fill="none" stroke="#8aff5c" stroke-width="1" opacity=".85"/><path d="M6.6 3.2 V7.8 L9.6 5" fill="none" stroke="#fff" stroke-width="1.2"/></svg>
<svg class="a" style="left:211px;top:243px" width="14" height="14" viewBox="0 0 14 14"><path d="M4.3 0.5 H9.7 L13.5 4.3 V9.7 L9.7 13.5 H4.3 L0.5 9.7 V4.3 Z" fill="url(#g)" stroke="#0e7a00" stroke-width="1"/><path d="M4.7 1.5 H9.3 L12.5 4.7 V9.3 L9.3 12.5 H4.7 L1.5 9.3 V4.7 Z" fill="none" stroke="#8aff5c" stroke-width="1" opacity=".85"/><path d="M6.6 3.2 V7.8 L9.6 5" fill="none" stroke="#fff" stroke-width="1.2"/></svg>
<div class="a" style="left:224px;top:243px;width:28px;text-align:center;line-height:13px;color:#000">60</div>
<div class="a" style="left:252px;top:243px;width:26px;text-align:center;line-height:13px;color:#000">70</div>
<svg class="a" style="left:281px;top:243px" width="14" height="14" viewBox="0 0 14 14"><path d="M4.3 0.5 H9.7 L13.5 4.3 V9.7 L9.7 13.5 H4.3 L0.5 9.7 V4.3 Z" fill="url(#r)" stroke="#8b0a00" stroke-width="1"/><path d="M4.7 1.5 H9.3 L12.5 4.7 V9.3 L9.3 12.5 H4.7 L1.5 9.3 V4.7 Z" fill="none" stroke="#ff8a48" stroke-width="1" opacity=".85"/><path d="M6.6 3.2 V7.8 L9.6 5" fill="none" stroke="#fff" stroke-width="1.2"/></svg>
<svg class="a" style="left:302px;top:243px" width="14" height="14" viewBox="0 0 14 14"><path d="M4.3 0.5 H9.7 L13.5 4.3 V9.7 L9.7 13.5 H4.3 L0.5 9.7 V4.3 Z" fill="url(#r)" stroke="#8b0a00" stroke-width="1"/><path d="M4.7 1.5 H9.3 L12.5 4.7 V9.3 L9.3 12.5 H4.7 L1.5 9.3 V4.7 Z" fill="none" stroke="#ff8a48" stroke-width="1" opacity=".85"/><path d="M6.6 3.2 V7.8 L9.6 5" fill="none" stroke="#fff" stroke-width="1.2"/></svg>
<div class="a" style="left:315px;top:243px;width:28px;text-align:center;line-height:13px;color:#000">5</div>
<div class="a" style="left:343px;top:243px;width:26px;text-align:center;line-height:13px;color:#000">10</div>
<svg class="a" style="left:372px;top:243px" width="14" height="14" viewBox="0 0 14 14"><path d="M4.3 0.5 H9.7 L13.5 4.3 V9.7 L9.7 13.5 H4.3 L0.5 9.7 V4.3 Z" fill="url(#r)" stroke="#8b0a00" stroke-width="1"/><path d="M4.7 1.5 H9.3 L12.5 4.7 V9.3 L9.3 12.5 H4.7 L1.5 9.3 V4.7 Z" fill="none" stroke="#ff8a48" stroke-width="1" opacity=".85"/><path d="M6.6 3.2 V7.8 L9.6 5" fill="none" stroke="#fff" stroke-width="1.2"/></svg>
<svg class="a" style="left:393px;top:243px" width="14" height="14" viewBox="0 0 14 14"><path d="M4.3 0.5 H9.7 L13.5 4.3 V9.7 L9.7 13.5 H4.3 L0.5 9.7 V4.3 Z" fill="url(#r)" stroke="#8b0a00" stroke-width="1"/><path d="M4.7 1.5 H9.3 L12.5 4.7 V9.3 L9.3 12.5 H4.7 L1.5 9.3 V4.7 Z" fill="none" stroke="#ff8a48" stroke-width="1" opacity=".85"/><path d="M6.6 3.2 V7.8 L9.6 5" fill="none" stroke="#fff" stroke-width="1.2"/></svg>
<div class="a" style="left:406px;top:243px;width:28px;text-align:center;line-height:13px;color:#000">2</div>
<div class="a" style="left:434px;top:243px;width:26px;text-align:center;line-height:13px;color:#000">8</div>
<svg class="a" style="left:463px;top:243px" width="14" height="14" viewBox="0 0 14 14"><path d="M4.3 0.5 H9.7 L13.5 4.3 V9.7 L9.7 13.5 H4.3 L0.5 9.7 V4.3 Z" fill="url(#r)" stroke="#8b0a00" stroke-width="1"/><path d="M4.7 1.5 H9.3 L12.5 4.7 V9.3 L9.3 12.5 H4.7 L1.5 9.3 V4.7 Z" fill="none" stroke="#ff8a48" stroke-width="1" opacity=".85"/><path d="M6.6 3.2 V7.8 L9.6 5" fill="none" stroke="#fff" stroke-width="1.2"/></svg>
<svg class="a" style="left:484px;top:243px" width="14" height="14" viewBox="0 0 14 14"><path d="M4.3 0.5 H9.7 L13.5 4.3 V9.7 L9.7 13.5 H4.3 L0.5 9.7 V4.3 Z" fill="url(#g)" stroke="#0e7a00" stroke-width="1"/><path d="M4.7 1.5 H9.3 L12.5 4.7 V9.3 L9.3 12.5 H4.7 L1.5 9.3 V4.7 Z" fill="none" stroke="#8aff5c" stroke-width="1" opacity=".85"/><path d="M6.6 3.2 V7.8 L9.6 5" fill="none" stroke="#fff" stroke-width="1.2"/></svg>
<div class="a" style="left:497px;top:243px;width:28px;text-align:center;line-height:13px;color:#000">-30</div>
<div class="a" style="left:525px;top:243px;width:26px;text-align:center;line-height:13px;color:#000">2</div>
<svg class="a" style="left:554px;top:243px" width="14" height="14" viewBox="0 0 14 14"><path d="M4.3 0.5 H9.7 L13.5 4.3 V9.7 L9.7 13.5 H4.3 L0.5 9.7 V4.3 Z" fill="url(#r)" stroke="#8b0a00" stroke-width="1"/><path d="M4.7 1.5 H9.3 L12.5 4.7 V9.3 L9.3 12.5 H4.7 L1.5 9.3 V4.7 Z" fill="none" stroke="#ff8a48" stroke-width="1" opacity=".85"/><path d="M6.6 3.2 V7.8 L9.6 5" fill="none" stroke="#fff" stroke-width="1.2"/></svg>
<div class="a" style="left:570px;top:243px;width:51px;text-align:center;line-height:13px;color:#000">5 min.</div>
<div class="a" style="left:621px;top:243px;width:56px;text-align:center;line-height:13px;color:#000">5 min.</div>
<svg class="a" style="left:683px;top:242px" width="14" height="16" viewBox="0 0 14 16"><rect x="8" y="1" width="1.2" height="4" fill="#0a6cd0"/><path d="M3 6 Q3 3.5 5.5 3.5 H7.5 Q10 3.5 10 6 V13.5 Q10 15 8.5 15 H4.5 Q3 15 3 13.5 Z" fill="#0a6cd0"/><path d="M4.5 7.6 V6.4 Q4.5 5 5.8 5 H7.2 Q8.5 5 8.5 6.4 V7.6 Z" fill="#fff" opacity=".92"/><g fill="#fff"><rect x="4.4" y="9" width="1.1" height="1.1"/><rect x="6" y="9" width="1.1" height="1.1"/><rect x="7.6" y="9" width="1.1" height="1.1"/><rect x="4.4" y="11" width="1.1" height="1.1"/><rect x="6" y="11" width="1.1" height="1.1"/><rect x="7.6" y="11" width="1.1" height="1.1"/><rect x="4.4" y="13" width="1.1" height="1.1"/><rect x="6" y="13" width="1.1" height="1.1"/><rect x="7.6" y="13" width="1.1" height="1.1"/></g></svg>
<svg class="a" style="left:701px;top:244px" width="14.3" height="12.4" viewBox="0 0 15 13"><path d="M0.5 11.5 V6.5 L5 0.5 H10 L14.5 6.5 V11.5 Z" fill="#dcdcdc" stroke="#333" stroke-width="1"/><path d="M1 11.5 V7 L5 7.2 L7.5 6.2 L10 7.2 L14 7 V11.5 Z" fill="#fff"/><path d="M1 11 L5.5 7 H9.5 L14 11" fill="none" stroke="#555" stroke-width=".9"/><path d="M0 11.7 H15" stroke="#000" stroke-width="1.5"/><path d="M14.5 6.5 V12" stroke="#000" stroke-width="1"/></svg>
<svg class="a" style="left:719px;top:242px" width="16" height="16" viewBox="0 0 16 16"><path d="M2 1 L5 4 M14 1 L11 4 M0 7.5 H3 M13 7.5 H16 M2 15.2 L4.6 12.9 M14 15.2 L11.4 12.9" stroke="#000" stroke-width="1"/><path d="M8 3.6 C5.6 3.6 5.2 5.6 5.2 7.6 C5.2 9.6 4.7 10.6 3.5 11.7 H12.5 C11.3 10.6 10.8 9.6 10.8 7.6 C10.8 5.6 10.4 3.6 8 3.6 Z" fill="#ffff50"/><rect x="7.4" y="2.4" width="1.2" height="2" fill="#000"/><rect x="3" y="11.6" width="10" height="1.1" fill="#000"/><rect x="6.8" y="12.7" width="2.4" height="1.3" fill="#000"/></svg>
<div class="a" style="left:30px;top:263px;width:708px;height:25px;background:#fff;border-bottom:1px solid #c0c0c0"></div>
<div class="a" style="left:30px;top:268px;width:25px;text-align:center;line-height:13px;color:#000">6</div>
<div class="a" style="left:56px;top:268px;width:60px;text-align:center;line-height:13px;color:#000">101.80</div>
<svg class="a" style="left:120px;top:268px" width="14" height="14" viewBox="0 0 14 14"><path d="M4.3 0.5 H9.7 L13.5 4.3 V9.7 L9.7 13.5 H4.3 L0.5 9.7 V4.3 Z" fill="url(#r)" stroke="#8b0a00" stroke-width="1"/><path d="M4.7 1.5 H9.3 L12.5 4.7 V9.3 L9.3 12.5 H4.7 L1.5 9.3 V4.7 Z" fill="none" stroke="#ff8a48" stroke-width="1" opacity=".85"/><path d="M6.6 3.2 V7.8 L9.6 5" fill="none" stroke="#fff" stroke-width="1.2"/></svg>
<div class="a" style="left:133px;top:268px;width:28px;text-align:center;line-height:13px;color:#000">10</div>
<div class="a" style="left:161px;top:268px;width:26px;text-align:center;line-height:13px;color:#000">90</div>
<svg class="a" style="left:190px;top:268px" width="14" height="14" viewBox="0 0 14 14"><path d="M4.3 0.5 H9.7 L13.5 4.3 V9.7 L9.7 13.5 H4.3 L0.5 9.7 V4.3 Z" fill="url(#r)" stroke="#8b0a00" stroke-width="1"/><path d="M4.7 1.5 H9.3 L12.5 4.7 V9.3 L9.3 12.5 H4.7 L1.5 9.3 V4.7 Z" fill="none" stroke="#ff8a48" stroke-width="1" opacity=".85"/><path d="M6.6 3.2 V7.8 L9.6 5" fill="none" stroke="#fff" stroke-width="1.2"/></svg>
<svg class="a" style="left:211px;top:268px" width="14" height="14" viewBox="0 0 14 14"><path d="M4.3 0.5 H9.7 L13.5 4.3 V9.7 L9.7 13.5 H4.3 L0.5 9.7 V4.3 Z" fill="url(#g)" stroke="#0e7a00" stroke-width="1"/><path d="M4.7 1.5 H9.3 L12.5 4.7 V9.3 L9.3 12.5 H4.7 L1.5 9.3 V4.7 Z" fill="none" stroke="#8aff5c" stroke-width="1" opacity=".85"/><path d="M6.6 3.2 V7.8 L9.6 5" fill="none" stroke="#fff" stroke-width="1.2"/></svg>
<div class="a" style="left:224px;top:268px;width:28px;text-align:center;line-height:13px;color:#000">60</div>
<div class="a" style="left:252px;top:268px;width:26px;text-align:center;line-height:13px;color:#000">70</div>
<svg class="a" style="left:281px;top:268px" width="14" height="14" viewBox="0 0 14 14"><path d="M4.3 0.5 H9.7 L13.5 4.3 V9.7 L9.7 13.5 H4.3 L0.5 9.7 V4.3 Z" fill="url(#r)" stroke="#8b0a00" stroke-width="1"/><path d="M4.7 1.5 H9.3 L12.5 4.7 V9.3 L9.3 12.5 H4.7 L1.5 9.3 V4.7 Z" fill="none" stroke="#ff8a48" stroke-width="1" opacity=".85"/><path d="M6.6 3.2 V7.8 L9.6 5" fill="none" stroke="#fff" stroke-width="1.2"/></svg>
<svg class="a" style="left:302px;top:268px" width="14" height="14" viewBox="0 0 14 14"><path d="M4.3 0.5 H9.7 L13.5 4.3 V9.7 L9.7 13.5 H4.3 L0.5 9.7 V4.3 Z" fill="url(#r)" stroke="#8b0a00" stroke-width="1"/><path d="M4.7 1.5 H9.3 L12.5 4.7 V9.3 L9.3 12.5 H4.7 L1.5 9.3 V4.7 Z" fill="none" stroke="#ff8a48" stroke-width="1" opacity=".85"/><path d="M6.6 3.2 V7.8 L9.6 5" fill="none" stroke="#fff" stroke-width="1.2"/></svg>
<div class="a" style="left:315px;top:268px;width:28px;text-align:center;line-height:13px;color:#000">5</div>
<div class="a" style="left:343px;top:268px;width:26px;text-align:center;line-height:13px;color:#000">10</div>
<svg class="a" style="left:372px;top:268px" width="14" height="14" viewBox="0 0 14 14"><path d="M4.3 0.5 H9.7 L13.5 4.3 V9.7 L9.7 13.5 H4.3 L0.5 9.7 V4.3 Z" fill="url(#r)" stroke="#8b0a00" stroke-width="1"/><path d="M4.7 1.5 H9.3 L12.5 4.7 V9.3 L9.3 12.5 H4.7 L1.5 9.3 V4.7 Z" fill="none" stroke="#ff8a48" stroke-width="1" opacity=".85"/><path d="M6.6 3.2 V7.8 L9.6 5" fill="none" stroke="#fff" stroke-width="1.2"/></svg>
<svg class="a" style="left:393px;top:268px" width="14" height="14" viewBox="0 0 14 14"><path d="M4.3 0.5 H9.7 L13.5 4.3 V9.7 L9.7 13.5 H4.3 L0.5 9.7 V4.3 Z" fill="url(#r)" stroke="#8b0a00" stroke-width="1"/><path d="M4.7 1.5 H9.3 L12.5 4.7 V9.3 L9.3 12.5 H4.7 L1.5 9.3 V4.7 Z" fill="none" stroke="#ff8a48" stroke-width="1" opacity=".85"/><path d="M6.6 3.2 V7.8 L9.6 5" fill="none" stroke="#fff" stroke-width="1.2"/></svg>
<div class="a" style="left:406px;top:268px;width:28px;text-align:center;line-height:13px;color:#000">2</div>
<div class="a" style="left:434px;top:268px;width:26px;text-align:center;line-height:13px;color:#000">8</div>
<svg class="a" style="left:463px;top:268px" width="14" height="14" viewBox="0 0 14 14"><path d="M4.3 0.5 H9.7 L13.5 4.3 V9.7 L9.7 13.5 H4.3 L0.5 9.7 V4.3 Z" fill="url(#r)" stroke="#8b0a00" stroke-width="1"/><path d="M4.7 1.5 H9.3 L12.5 4.7 V9.3 L9.3 12.5 H4.7 L1.5 9.3 V4.7 Z" fill="none" stroke="#ff8a48" stroke-width="1" opacity=".85"/><path d="M6.6 3.2 V7.8 L9.6 5" fill="none" stroke="#fff" stroke-width="1.2"/></svg>
<svg class="a" style="left:484px;top:268px" width="14" height="14" viewBox="0 0 14 14"><path d="M4.3 0.5 H9.7 L13.5 4.3 V9.7 L9.7 13.5 H4.3 L0.5 9.7 V4.3 Z" fill="url(#g)" stroke="#0e7a00" stroke-width="1"/><path d="M4.7 1.5 H9.3 L12.5 4.7 V9.3 L9.3 12.5 H4.7 L1.5 9.3 V4.7 Z" fill="none" stroke="#8aff5c" stroke-width="1" opacity=".85"/><path d="M6.6 3.2 V7.8 L9.6 5" fill="none" stroke="#fff" stroke-width="1.2"/></svg>
<div class="a" style="left:497px;top:268px;width:28px;text-align:center;line-height:13px;color:#000">-30</div>
<div class="a" style="left:525px;top:268px;width:26px;text-align:center;line-height:13px;color:#000">2</div>
<svg class="a" style="left:554px;top:268px" width="14" height="14" viewBox="0 0 14 14"><path d="M4.3 0.5 H9.7 L13.5 4.3 V9.7 L9.7 13.5 H4.3 L0.5 9.7 V4.3 Z" fill="url(#r)" stroke="#8b0a00" stroke-width="1"/><path d="M4.7 1.5 H9.3 L12.5 4.7 V9.3 L9.3 12.5 H4.7 L1.5 9.3 V4.7 Z" fill="none" stroke="#ff8a48" stroke-width="1" opacity=".85"/><path d="M6.6 3.2 V7.8 L9.6 5" fill="none" stroke="#fff" stroke-width="1.2"/></svg>
<div class="a" style="left:570px;top:268px;width:51px;text-align:center;line-height:13px;color:#000">5 min.</div>
<div class="a" style="left:621px;top:268px;width:56px;text-align:center;line-height:13px;color:#000">5 min.</div>
<svg class="a" style="left:683px;top:267px" width="14" height="16" viewBox="0 0 14 16"><rect x="8" y="1" width="1.2" height="4" fill="#0a6cd0"/><path d="M3 6 Q3 3.5 5.5 3.5 H7.5 Q10 3.5 10 6 V13.5 Q10 15 8.5 15 H4.5 Q3 15 3 13.5 Z" fill="#0a6cd0"/><path d="M4.5 7.6 V6.4 Q4.5 5 5.8 5 H7.2 Q8.5 5 8.5 6.4 V7.6 Z" fill="#fff" opacity=".92"/><g fill="#fff"><rect x="4.4" y="9" width="1.1" height="1.1"/><rect x="6" y="9" width="1.1" height="1.1"/><rect x="7.6" y="9" width="1.1" height="1.1"/><rect x="4.4" y="11" width="1.1" height="1.1"/><rect x="6" y="11" width="1.1" height="1.1"/><rect x="7.6" y="11" width="1.1" height="1.1"/><rect x="4.4" y="13" width="1.1" height="1.1"/><rect x="6" y="13" width="1.1" height="1.1"/><rect x="7.6" y="13" width="1.1" height="1.1"/></g><path d="M0 1 L14 15 M14 1 L0 15" stroke="#f00" stroke-width="1.1"/></svg>
<svg class="a" style="left:701px;top:269px" width="14.3" height="12.4" viewBox="0 0 15 13"><path d="M0.5 11.5 V6.5 L5 0.5 H10 L14.5 6.5 V11.5 Z" fill="#dcdcdc" stroke="#333" stroke-width="1"/><path d="M1 11.5 V7 L5 7.2 L7.5 6.2 L10 7.2 L14 7 V11.5 Z" fill="#fff"/><path d="M1 11 L5.5 7 H9.5 L14 11" fill="none" stroke="#555" stroke-width=".9"/><path d="M0 11.7 H15" stroke="#000" stroke-width="1.5"/><path d="M14.5 6.5 V12" stroke="#000" stroke-width="1"/></svg>
<svg class="a" style="left:719px;top:267px" width="16" height="16" viewBox="0 0 16 16"><path d="M8 3.6 C5.6 3.6 5.2 5.6 5.2 7.6 C5.2 9.6 4.7 10.6 3.5 11.7 H12.5 C11.3 10.6 10.8 9.6 10.8 7.6 C10.8 5.6 10.4 3.6 8 3.6 Z" fill="#ffff50"/><rect x="7.4" y="2.4" width="1.2" height="2" fill="#000"/><rect x="3" y="11.6" width="10" height="1.1" fill="#000"/><rect x="6.8" y="12.7" width="2.4" height="1.3" fill="#000"/><path d="M0.5 0.5 L15.5 15 M15.5 0.5 L0.5 15" stroke="#f00" stroke-width="1.1"/></svg>
<div class="a" style="left:30px;top:288px;width:708px;height:25px;background:#fed3bf;border-bottom:1px solid #c0c0c0"></div>
<div class="a" style="left:30px;top:293px;width:25px;text-align:center;line-height:13px;color:#000">7</div>
<div class="a" style="left:56px;top:293px;width:60px;text-align:center;line-height:13px;color:#000">104.50</div>
<svg class="a" style="left:120px;top:293px" width="14" height="14" viewBox="0 0 14 14"><path d="M4.3 0.5 H9.7 L13.5 4.3 V9.7 L9.7 13.5 H4.3 L0.5 9.7 V4.3 Z" fill="url(#r)" stroke="#8b0a00" stroke-width="1"/><path d="M4.7 1.5 H9.3 L12.5 4.7 V9.3 L9.3 12.5 H4.7 L1.5 9.3 V4.7 Z" fill="none" stroke="#ff8a48" stroke-width="1" opacity=".85"/><path d="M6.6 3.2 V7.8 L9.6 5" fill="none" stroke="#fff" stroke-width="1.2"/></svg>
<div class="a" style="left:133px;top:293px;width:28px;text-align:center;line-height:13px;color:#000">10</div>
<div class="a" style="left:161px;top:293px;width:26px;text-align:center;line-height:13px;color:#000">90</div>
<svg class="a" style="left:190px;top:293px" width="14" height="14" viewBox="0 0 14 14"><path d="M4.3 0.5 H9.7 L13.5 4.3 V9.7 L9.7 13.5 H4.3 L0.5 9.7 V4.3 Z" fill="url(#r)" stroke="#8b0a00" stroke-width="1"/><path d="M4.7 1.5 H9.3 L12.5 4.7 V9.3 L9.3 12.5 H4.7 L1.5 9.3 V4.7 Z" fill="none" stroke="#ff8a48" stroke-width="1" opacity=".85"/><path d="M6.6 3.2 V7.8 L9.6 5" fill="none" stroke="#fff" stroke-width="1.2"/></svg>
<svg class="a" style="left:211px;top:293px" width="14" height="14" viewBox="0 0 14 14"><path d="M4.3 0.5 H9.7 L13.5 4.3 V9.7 L9.7 13.5 H4.3 L0.5 9.7 V4.3 Z" fill="url(#g)" stroke="#0e7a00" stroke-width="1"/><path d="M4.7 1.5 H9.3 L12.5 4.7 V9.3 L9.3 12.5 H4.7 L1.5 9.3 V4.7 Z" fill="none" stroke="#8aff5c" stroke-width="1" opacity=".85"/><path d="M6.6 3.2 V7.8 L9.6 5" fill="none" stroke="#fff" stroke-width="1.2"/></svg>
<div class="a" style="left:224px;top:293px;width:28px;text-align:center;line-height:13px;color:#000">60</div>
<div class="a" style="left:252px;top:293px;width:26px;text-align:center;line-height:13px;color:#000">70</div>
<svg class="a" style="left:281px;top:293px" width="14" height="14" viewBox="0 0 14 14"><path d="M4.3 0.5 H9.7 L13.5 4.3 V9.7 L9.7 13.5 H4.3 L0.5 9.7 V4.3 Z" fill="url(#r)" stroke="#8b0a00" stroke-width="1"/><path d="M4.7 1.5 H9.3 L12.5 4.7 V9.3 L9.3 12.5 H4.7 L1.5 9.3 V4.7 Z" fill="none" stroke="#ff8a48" stroke-width="1" opacity=".85"/><path d="M6.6 3.2 V7.8 L9.6 5" fill="none" stroke="#fff" stroke-width="1.2"/></svg>
<svg class="a" style="left:302px;top:293px" width="14" height="14" viewBox="0 0 14 14"><path d="M4.3 0.5 H9.7 L13.5 4.3 V9.7 L9.7 13.5 H4.3 L0.5 9.7 V4.3 Z" fill="url(#r)" stroke="#8b0a00" stroke-width="1"/><path d="M4.7 1.5 H9.3 L12.5 4.7 V9.3 L9.3 12.5 H4.7 L1.5 9.3 V4.7 Z" fill="none" stroke="#ff8a48" stroke-width="1" opacity=".85"/><path d="M6.6 3.2 V7.8 L9.6 5" fill="none" stroke="#fff" stroke-width="1.2"/></svg>
<div class="a" style="left:315px;top:293px;width:28px;text-align:center;line-height:13px;color:#000">5</div>
<div class="a" style="left:343px;top:293px;width:26px;text-align:center;line-height:13px;color:#000">10</div>
<svg class="a" style="left:372px;top:293px" width="14" height="14" viewBox="0 0 14 14"><path d="M4.3 0.5 H9.7 L13.5 4.3 V9.7 L9.7 13.5 H4.3 L0.5 9.7 V4.3 Z" fill="url(#r)" stroke="#8b0a00" stroke-width="1"/><path d="M4.7 1.5 H9.3 L12.5 4.7 V9.3 L9.3 12.5 H4.7 L1.5 9.3 V4.7 Z" fill="none" stroke="#ff8a48" stroke-width="1" opacity=".85"/><path d="M6.6 3.2 V7.8 L9.6 5" fill="none" stroke="#fff" stroke-width="1.2"/></svg>
<svg class="a" style="left:393px;top:293px" width="14" height="14" viewBox="0 0 14 14"><path d="M4.3 0.5 H9.7 L13.5 4.3 V9.7 L9.7 13.5 H4.3 L0.5 9.7 V4.3 Z" fill="url(#r)" stroke="#8b0a00" stroke-width="1"/><path d="M4.7 1.5 H9.3 L12.5 4.7 V9.3 L9.3 12.5 H4.7 L1.5 9.3 V4.7 Z" fill="none" stroke="#ff8a48" stroke-width="1" opacity=".85"/><path d="M6.6 3.2 V7.8 L9.6 5" fill="none" stroke="#fff" stroke-width="1.2"/></svg>
<div class="a" style="left:406px;top:293px;width:28px;text-align:center;line-height:13px;color:#000">2</div>
<div class="a" style="left:434px;top:293px;width:26px;text-align:center;line-height:13px;color:#000">8</div>
<svg class="a" style="left:463px;top:293px" width="14" height="14" viewBox="0 0 14 14"><path d="M4.3 0.5 H9.7 L13.5 4.3 V9.7 L9.7 13.5 H4.3 L0.5 9.7 V4.3 Z" fill="url(#r)" stroke="#8b0a00" stroke-width="1"/><path d="M4.7 1.5 H9.3 L12.5 4.7 V9.3 L9.3 12.5 H4.7 L1.5 9.3 V4.7 Z" fill="none" stroke="#ff8a48" stroke-width="1" opacity=".85"/><path d="M6.6 3.2 V7.8 L9.6 5" fill="none" stroke="#fff" stroke-width="1.2"/></svg>
<svg class="a" style="left:484px;top:293px" width="14" height="14" viewBox="0 0 14 14"><path d="M4.3 0.5 H9.7 L13.5 4.3 V9.7 L9.7 13.5 H4.3 L0.5 9.7 V4.3 Z" fill="url(#g)" stroke="#0e7a00" stroke-width="1"/><path d="M4.7 1.5 H9.3 L12.5 4.7 V9.3 L9.3 12.5 H4.7 L1.5 9.3 V4.7 Z" fill="none" stroke="#8aff5c" stroke-width="1" opacity=".85"/><path d="M6.6 3.2 V7.8 L9.6 5" fill="none" stroke="#fff" stroke-width="1.2"/></svg>
<div class="a" style="left:497px;top:293px;width:28px;text-align:center;line-height:13px;color:#000">-30</div>
<div class="a" style="left:525px;top:293px;width:26px;text-align:center;line-height:13px;color:#000">2</div>
<svg class="a" style="left:554px;top:293px" width="14" height="14" viewBox="0 0 14 14"><path d="M4.3 0.5 H9.7 L13.5 4.3 V9.7 L9.7 13.5 H4.3 L0.5 9.7 V4.3 Z" fill="url(#r)" stroke="#8b0a00" stroke-width="1"/><path d="M4.7 1.5 H9.3 L12.5 4.7 V9.3 L9.3 12.5 H4.7 L1.5 9.3 V4.7 Z" fill="none" stroke="#ff8a48" stroke-width="1" opacity=".85"/><path d="M6.6 3.2 V7.8 L9.6 5" fill="none" stroke="#fff" stroke-width="1.2"/></svg>
<div class="a" style="left:570px;top:293px;width:51px;text-align:center;line-height:13px;color:#000">5 min.</div>
<div class="a" style="left:621px;top:293px;width:56px;text-align:center;line-height:13px;color:#000">5 min.</div>
<svg class="a" style="left:683px;top:292px" width="14" height="16" viewBox="0 0 14 16"><rect x="8" y="1" width="1.2" height="4" fill="#0a6cd0"/><path d="M3 6 Q3 3.5 5.5 3.5 H7.5 Q10 3.5 10 6 V13.5 Q10 15 8.5 15 H4.5 Q3 15 3 13.5 Z" fill="#0a6cd0"/><path d="M4.5 7.6 V6.4 Q4.5 5 5.8 5 H7.2 Q8.5 5 8.5 6.4 V7.6 Z" fill="#fff" opacity=".92"/><g fill="#fff"><rect x="4.4" y="9" width="1.1" height="1.1"/><rect x="6" y="9" width="1.1" height="1.1"/><rect x="7.6" y="9" width="1.1" height="1.1"/><rect x="4.4" y="11" width="1.1" height="1.1"/><rect x="6" y="11" width="1.1" height="1.1"/><rect x="7.6" y="11" width="1.1" height="1.1"/><rect x="4.4" y="13" width="1.1" height="1.1"/><rect x="6" y="13" width="1.1" height="1.1"/><rect x="7.6" y="13" width="1.1" height="1.1"/></g><path d="M0 1 L14 15 M14 1 L0 15" stroke="#f00" stroke-width="1.1"/></svg>
<svg class="a" style="left:701px;top:294px" width="14.3" height="12.4" viewBox="0 0 15 13"><path d="M0.5 11.5 V6.5 L5 0.5 H10 L14.5 6.5 V11.5 Z" fill="#dcdcdc" stroke="#333" stroke-width="1"/><path d="M1 11.5 V7 L5 7.2 L7.5 6.2 L10 7.2 L14 7 V11.5 Z" fill="#fff"/><path d="M1 11 L5.5 7 H9.5 L14 11" fill="none" stroke="#555" stroke-width=".9"/><path d="M0 11.7 H15" stroke="#000" stroke-width="1.5"/><path d="M14.5 6.5 V12" stroke="#000" stroke-width="1"/></svg>
<svg class="a" style="left:719px;top:292px" width="16" height="16" viewBox="0 0 16 16"><path d="M8 3.6 C5.6 3.6 5.2 5.6 5.2 7.6 C5.2 9.6 4.7 10.6 3.5 11.7 H12.5 C11.3 10.6 10.8 9.6 10.8 7.6 C10.8 5.6 10.4 3.6 8 3.6 Z" fill="#ffff50"/><rect x="7.4" y="2.4" width="1.2" height="2" fill="#000"/><rect x="3" y="11.6" width="10" height="1.1" fill="#000"/><rect x="6.8" y="12.7" width="2.4" height="1.3" fill="#000"/><path d="M0.5 0.5 L15.5 15 M15.5 0.5 L0.5 15" stroke="#f00" stroke-width="1.1"/></svg>
<div class="a" style="left:30px;top:313px;width:708px;height:23px;background:#fff;border-bottom:1px solid #c0c0c0"></div>
<div class="a" style="left:30px;top:318px;width:25px;text-align:center;line-height:13px;color:#000">8</div>
<div class="a" style="left:56px;top:318px;width:60px;text-align:center;line-height:13px;color:#000">105.10</div>
<svg class="a" style="left:120px;top:318px" width="14" height="14" viewBox="0 0 14 14"><path d="M4.3 0.5 H9.7 L13.5 4.3 V9.7 L9.7 13.5 H4.3 L0.5 9.7 V4.3 Z" fill="url(#r)" stroke="#8b0a00" stroke-width="1"/><path d="M4.7 1.5 H9.3 L12.5 4.7 V9.3 L9.3 12.5 H4.7 L1.5 9.3 V4.7 Z" fill="none" stroke="#ff8a48" stroke-width="1" opacity=".85"/><path d="M6.6 3.2 V7.8 L9.6 5" fill="none" stroke="#fff" stroke-width="1.2"/></svg>
<div class="a" style="left:133px;top:318px;width:28px;text-align:center;line-height:13px;color:#000">10</div>
<div class="a" style="left:161px;top:318px;width:26px;text-align:center;line-height:13px;color:#000">90</div>
<svg class="a" style="left:190px;top:318px" width="14" height="14" viewBox="0 0 14 14"><path d="M4.3 0.5 H9.7 L13.5 4.3 V9.7 L9.7 13.5 H4.3 L0.5 9.7 V4.3 Z" fill="url(#r)" stroke="#8b0a00" stroke-width="1"/><path d="M4.7 1.5 H9.3 L12.5 4.7 V9.3 L9.3 12.5 H4.7 L1.5 9.3 V4.7 Z" fill="none" stroke="#ff8a48" stroke-width="1" opacity=".85"/><path d="M6.6 3.2 V7.8 L9.6 5" fill="none" stroke="#fff" stroke-width="1.2"/></svg>
<svg class="a" style="left:211px;top:318px" width="14" height="14" viewBox="0 0 14 14"><path d="M4.3 0.5 H9.7 L13.5 4.3 V9.7 L9.7 13.5 H4.3 L0.5 9.7 V4.3 Z" fill="url(#g)" stroke="#0e7a00" stroke-width="1"/><path d="M4.7 1.5 H9.3 L12.5 4.7 V9.3 L9.3 12.5 H4.7 L1.5 9.3 V4.7 Z" fill="none" stroke="#8aff5c" stroke-width="1" opacity=".85"/><path d="M6.6 3.2 V7.8 L9.6 5" fill="none" stroke="#fff" stroke-width="1.2"/></svg>
<div class="a" style="left:224px;top:318px;width:28px;text-align:center;line-height:13px;color:#000">60</div>
<div class="a" style="left:252px;top:318px;width:26px;text-align:center;line-height:13px;color:#000">70</div>
<svg class="a" style="left:281px;top:318px" width="14" height="14" viewBox="0 0 14 14"><path d="M4.3 0.5 H9.7 L13.5 4.3 V9.7 L9.7 13.5 H4.3 L0.5 9.7 V4.3 Z" fill="url(#r)" stroke="#8b0a00" stroke-width="1"/><path d="M4.7 1.5 H9.3 L12.5 4.7 V9.3 L9.3 12.5 H4.7 L1.5 9.3 V4.7 Z" fill="none" stroke="#ff8a48" stroke-width="1" opacity=".85"/><path d="M6.6 3.2 V7.8 L9.6 5" fill="none" stroke="#fff" stroke-width="1.2"/></svg>
<svg class="a" style="left:302px;top:318px" width="14" height="14" viewBox="0 0 14 14"><path d="M4.3 0.5 H9.7 L13.5 4.3 V9.7 L9.7 13.5 H4.3 L0.5 9.7 V4.3 Z" fill="url(#r)" stroke="#8b0a00" stroke-width="1"/><path d="M4.7 1.5 H9.3 L12.5 4.7 V9.3 L9.3 12.5 H4.7 L1.5 9.3 V4.7 Z" fill="none" stroke="#ff8a48" stroke-width="1" opacity=".85"/><path d="M6.6 3.2 V7.8 L9.6 5" fill="none" stroke="#fff" stroke-width="1.2"/></svg>
<div class="a" style="left:315px;top:318px;width:28px;text-align:center;line-height:13px;color:#000">5</div>
<div class="a" style="left:343px;top:318px;width:26px;text-align:center;line-height:13px;color:#000">10</div>
<svg class="a" style="left:372px;top:318px" width="14" height="14" viewBox="0 0 14 14"><path d="M4.3 0.5 H9.7 L13.5 4.3 V9.7 L9.7 13.5 H4.3 L0.5 9.7 V4.3 Z" fill="url(#r)" stroke="#8b0a00" stroke-width="1"/><path d="M4.7 1.5 H9.3 L12.5 4.7 V9.3 L9.3 12.5 H4.7 L1.5 9.3 V4.7 Z" fill="none" stroke="#ff8a48" stroke-width="1" opacity=".85"/><path d="M6.6 3.2 V7.8 L9.6 5" fill="none" stroke="#fff" stroke-width="1.2"/></svg>
<svg class="a" style="left:393px;top:318px" width="14" height="14" viewBox="0 0 14 14"><path d="M4.3 0.5 H9.7 L13.5 4.3 V9.7 L9.7 13.5 H4.3 L0.5 9.7 V4.3 Z" fill="url(#r)" stroke="#8b0a00" stroke-width="1"/><path d="M4.7 1.5 H9.3 L12.5 4.7 V9.3 L9.3 12.5 H4.7 L1.5 9.3 V4.7 Z" fill="none" stroke="#ff8a48" stroke-width="1" opacity=".85"/><path d="M6.6 3.2 V7.8 L9.6 5" fill="none" stroke="#fff" stroke-width="1.2"/></svg>
<div class="a" style="left:406px;top:318px;width:28px;text-align:center;line-height:13px;color:#000">2</div>
<div class="a" style="left:434px;top:318px;width:26px;text-align:center;line-height:13px;color:#000">8</div>
<svg class="a" style="left:463px;top:318px" width="14" height="14" viewBox="0 0 14 14"><path d="M4.3 0.5 H9.7 L13.5 4.3 V9.7 L9.7 13.5 H4.3 L0.5 9.7 V4.3 Z" fill="url(#r)" stroke="#8b0a00" stroke-width="1"/><path d="M4.7 1.5 H9.3 L12.5 4.7 V9.3 L9.3 12.5 H4.7 L1.5 9.3 V4.7 Z" fill="none" stroke="#ff8a48" stroke-width="1" opacity=".85"/><path d="M6.6 3.2 V7.8 L9.6 5" fill="none" stroke="#fff" stroke-width="1.2"/></svg>
<svg class="a" style="left:484px;top:318px" width="14" height="14" viewBox="0 0 14 14"><path d="M4.3 0.5 H9.7 L13.5 4.3 V9.7 L9.7 13.5 H4.3 L0.5 9.7 V4.3 Z" fill="url(#g)" stroke="#0e7a00" stroke-width="1"/><path d="M4.7 1.5 H9.3 L12.5 4.7 V9.3 L9.3 12.5 H4.7 L1.5 9.3 V4.7 Z" fill="none" stroke="#8aff5c" stroke-width="1" opacity=".85"/><path d="M6.6 3.2 V7.8 L9.6 5" fill="none" stroke="#fff" stroke-width="1.2"/></svg>
<div class="a" style="left:497px;top:318px;width:28px;text-align:center;line-height:13px;color:#000">-30</div>
<div class="a" style="left:525px;top:318px;width:26px;text-align:center;line-height:13px;color:#000">2</div>
<svg class="a" style="left:554px;top:318px" width="14" height="14" viewBox="0 0 14 14"><path d="M4.3 0.5 H9.7 L13.5 4.3 V9.7 L9.7 13.5 H4.3 L0.5 9.7 V4.3 Z" fill="url(#r)" stroke="#8b0a00" stroke-width="1"/><path d="M4.7 1.5 H9.3 L12.5 4.7 V9.3 L9.3 12.5 H4.7 L1.5 9.3 V4.7 Z" fill="none" stroke="#ff8a48" stroke-width="1" opacity=".85"/><path d="M6.6 3.2 V7.8 L9.6 5" fill="none" stroke="#fff" stroke-width="1.2"/></svg>
<div class="a" style="left:570px;top:318px;width:51px;text-align:center;line-height:13px;color:#000">5 min.</div>
<div class="a" style="left:621px;top:318px;width:56px;text-align:center;line-height:13px;color:#000">5 min.</div>
<svg class="a" style="left:683px;top:317px" width="14" height="16" viewBox="0 0 14 16"><rect x="8" y="1" width="1.2" height="4" fill="#0a6cd0"/><path d="M3 6 Q3 3.5 5.5 3.5 H7.5 Q10 3.5 10 6 V13.5 Q10 15 8.5 15 H4.5 Q3 15 3 13.5 Z" fill="#0a6cd0"/><path d="M4.5 7.6 V6.4 Q4.5 5 5.8 5 H7.2 Q8.5 5 8.5 6.4 V7.6 Z" fill="#fff" opacity=".92"/><g fill="#fff"><rect x="4.4" y="9" width="1.1" height="1.1"/><rect x="6" y="9" width="1.1" height="1.1"/><rect x="7.6" y="9" width="1.1" height="1.1"/><rect x="4.4" y="11" width="1.1" height="1.1"/><rect x="6" y="11" width="1.1" height="1.1"/><rect x="7.6" y="11" width="1.1" height="1.1"/><rect x="4.4" y="13" width="1.1" height="1.1"/><rect x="6" y="13" width="1.1" height="1.1"/><rect x="7.6" y="13" width="1.1" height="1.1"/></g><path d="M0 1 L14 15 M14 1 L0 15" stroke="#f00" stroke-width="1.1"/></svg>
<svg class="a" style="left:701px;top:319px" width="14.3" height="12.4" viewBox="0 0 15 13"><path d="M0.5 11.5 V6.5 L5 0.5 H10 L14.5 6.5 V11.5 Z" fill="#dcdcdc" stroke="#333" stroke-width="1"/><path d="M1 11.5 V7 L5 7.2 L7.5 6.2 L10 7.2 L14 7 V11.5 Z" fill="#fff"/><path d="M1 11 L5.5 7 H9.5 L14 11" fill="none" stroke="#555" stroke-width=".9"/><path d="M0 11.7 H15" stroke="#000" stroke-width="1.5"/><path d="M14.5 6.5 V12" stroke="#000" stroke-width="1"/></svg>
<svg class="a" style="left:719px;top:317px" width="16" height="16" viewBox="0 0 16 16"><path d="M8 3.6 C5.6 3.6 5.2 5.6 5.2 7.6 C5.2 9.6 4.7 10.6 3.5 11.7 H12.5 C11.3 10.6 10.8 9.6 10.8 7.6 C10.8 5.6 10.4 3.6 8 3.6 Z" fill="#ffff50"/><rect x="7.4" y="2.4" width="1.2" height="2" fill="#000"/><rect x="3" y="11.6" width="10" height="1.1" fill="#000"/><rect x="6.8" y="12.7" width="2.4" height="1.3" fill="#000"/><path d="M0.5 0.5 L15.5 15 M15.5 0.5 L0.5 15" stroke="#f00" stroke-width="1.1"/></svg>
<div class="a" style="left:55px;top:138px;width:1px;height:198px;background:#c8c8c8"></div>
<div class="a" style="left:116px;top:138px;width:1px;height:198px;background:#c8c8c8"></div>
<div class="a" style="left:207px;top:138px;width:1px;height:198px;background:#b8b8b8"></div>
<div class="a" style="left:298px;top:138px;width:1px;height:198px;background:#b8b8b8"></div>
<div class="a" style="left:389px;top:138px;width:1px;height:198px;background:#b8b8b8"></div>
<div class="a" style="left:480px;top:138px;width:1px;height:198px;background:#b8b8b8"></div>
<div class="a" style="left:571px;top:138px;width:1px;height:198px;background:#b8b8b8"></div>
<div class="a" style="left:622px;top:138px;width:1px;height:198px;background:#b8b8b8"></div>
<div class="a" style="left:678px;top:138px;width:1px;height:198px;background:#b8b8b8"></div>
<div class="a" style="left:737px;top:138px;width:1px;height:198px;background:#c8c8c8"></div>
<div class="a" style="left:738px;top:100px;width:18px;height:236px;background:linear-gradient(90deg,#f1f0ea,#fbfbf8 40%,#fefefc)"></div>
<div class="a" style="left:740px;top:102px;width:13px;height:14px;border-radius:2px;background:linear-gradient(135deg,#d0ddfe,#b3c6f7);box-shadow:0 0 0 1px #fdfdff,1px 1px 1px 1px #b9c9ee"><svg width="14" height="14" style="display:block;margin-left:-.5px"><path d="M3.5 9 L7 5.5 L10.5 9" fill="none" stroke="#4d6185" stroke-width="2.2"/></svg></div>
<div class="a" style="left:740px;top:320px;width:13px;height:14px;border-radius:2px;background:linear-gradient(135deg,#d0ddfe,#b3c6f7);box-shadow:0 0 0 1px #fdfdff,1px 1px 1px 1px #b9c9ee"><svg width="14" height="14" style="display:block;margin-left:-.5px"><path d="M3.5 5 L7 8.5 L10.5 5" fill="none" stroke="#4d6185" stroke-width="2.2"/></svg></div>
<div class="a" style="left:740px;top:119px;width:13px;height:14px;border-radius:2px;background:linear-gradient(90deg,#cbd9fd,#bccdf9);box-shadow:0 0 0 1px #fdfdff,1px 1px 1px 1px #b9c9ee"><svg width="14" height="14" style="display:block"><path d="M4 3.5 H10 M4 5.5 H10 M4 7.5 H10 M4 9.5 H10" stroke="#eef4fe" stroke-width="1"/><path d="M4.5 4.5 H10.5 M4.5 6.5 H10.5 M4.5 8.5 H10.5 M4.5 10.5 H10.5" stroke="#a8bcf0" stroke-width="1"/></svg></div>
<div class="a grp" style="left:28px;top:350px;width:729px;height:114px"></div>
<div class="a gt" style="left:34px;top:343px;background:#f8f8f6;letter-spacing:-.05px">Channel [ 01 ]</div>
<div class="a" style="left:36px;top:365px;line-height:13px;">Frequency</div>
<div class="a spn" style="left:92px;top:361px;width:61px;height:21px"><div class="v">90.50</div><div class="u"><svg width="15" height="7" style="display:block"><path d="M4 5.6 L7.5 2.4 L11 5.6" fill="none" stroke="#43577c" stroke-width="2.1"/></svg></div><div class="d"><svg width="15" height="7" style="display:block"><path d="M4 1.4 L7.5 4.6 L11 1.4" fill="none" stroke="#43577c" stroke-width="2.1"/></svg></div></div>
<div class="a" style="left:155px;top:365px;line-height:13px;">MHz</div>
<div class="a chk" style="left:188px;top:365px"><svg width="11" height="11" style="display:block"><path d="M2 4.5 L4.5 7 L9 2.5" fill="none" stroke="#21a121" stroke-width="2.2"/></svg></div>
<div class="a" style="left:204px;top:365px;line-height:13px;">Active</div>
<div class="a" style="left:252px;top:365px;line-height:13px;">Alarm After</div>
<div class="a spn" style="left:308px;top:361px;width:41px;height:21px"><div class="v">59</div><div class="u"><svg width="15" height="7" style="display:block"><path d="M4 5.6 L7.5 2.4 L11 5.6" fill="none" stroke="#43577c" stroke-width="2.1"/></svg></div><div class="d"><svg width="15" height="7" style="display:block"><path d="M4 1.4 L7.5 4.6 L11 1.4" fill="none" stroke="#43577c" stroke-width="2.1"/></svg></div></div>
<div class="a cmb" style="left:352px;top:361px;width:45px;height:21px"><div class="v">min</div><div class="dd"><svg width="15" height="17" style="display:block"><path d="M3.5 6.3 L7.5 10.3 L11.5 6.3" fill="none" stroke="#4d6185" stroke-width="2.2"/></svg></div></div>
<div class="a" style="left:403px;top:365px;line-height:13px;">Alarm Recovery Time</div>
<div class="a spn" style="left:508px;top:361px;width:41px;height:21px"><div class="v">5</div><div class="u"><svg width="15" height="7" style="display:block"><path d="M4 5.6 L7.5 2.4 L11 5.6" fill="none" stroke="#43577c" stroke-width="2.1"/></svg></div><div class="d"><svg width="15" height="7" style="display:block"><path d="M4 1.4 L7.5 4.6 L11 1.4" fill="none" stroke="#43577c" stroke-width="2.1"/></svg></div></div>
<div class="a cmb" style="left:552px;top:361px;width:45px;height:21px"><div class="v">min</div><div class="dd"><svg width="15" height="17" style="display:block"><path d="M3.5 6.3 L7.5 10.3 L11.5 6.3" fill="none" stroke="#4d6185" stroke-width="2.2"/></svg></div></div>
<div class="a" style="left:604px;top:365px;line-height:13px;">Alarm Type</div>
<div class="a" style="left:409px;top:336px;font-size:12px;line-height:14px;color:#f00;letter-spacing:0">This enables SMS alarm for the selected channel</div>
<svg class="a" style="left:670px;top:338px" width="14" height="14"><path d="M2 4.5 H9.5 V11" fill="none" stroke="#f00" stroke-width="1"/><path d="M6.5 8.5 L9.5 12.5 L12.5 8.5 Z" fill="#f00"/></svg>
<div class="a" style="left:665px;top:352px;width:24px;height:38px;border:1px solid #f00"></div>
<svg class="a" style="left:670px;top:354px" width="14" height="16" viewBox="0 0 14 16"><rect x="8" y="1" width="1.2" height="4" fill="#0a6cd0"/><path d="M3 6 Q3 3.5 5.5 3.5 H7.5 Q10 3.5 10 6 V13.5 Q10 15 8.5 15 H4.5 Q3 15 3 13.5 Z" fill="#0a6cd0"/><path d="M4.5 7.6 V6.4 Q4.5 5 5.8 5 H7.2 Q8.5 5 8.5 6.4 V7.6 Z" fill="#fff" opacity=".92"/><g fill="#fff"><rect x="4.4" y="9" width="1.1" height="1.1"/><rect x="6" y="9" width="1.1" height="1.1"/><rect x="7.6" y="9" width="1.1" height="1.1"/><rect x="4.4" y="11" width="1.1" height="1.1"/><rect x="6" y="11" width="1.1" height="1.1"/><rect x="7.6" y="11" width="1.1" height="1.1"/><rect x="4.4" y="13" width="1.1" height="1.1"/><rect x="6" y="13" width="1.1" height="1.1"/><rect x="7.6" y="13" width="1.1" height="1.1"/></g></svg>
<svg class="a" style="left:698px;top:357px" width="14.3" height="12.4" viewBox="0 0 15 13"><path d="M0.5 11.5 V6.5 L5 0.5 H10 L14.5 6.5 V11.5 Z" fill="#dcdcdc" stroke="#333" stroke-width="1"/><path d="M1 11.5 V7 L5 7.2 L7.5 6.2 L10 7.2 L14 7 V11.5 Z" fill="#fff"/><path d="M1 11 L5.5 7 H9.5 L14 11" fill="none" stroke="#555" stroke-width=".9"/><path d="M0 11.7 H15" stroke="#000" stroke-width="1.5"/><path d="M14.5 6.5 V12" stroke="#000" stroke-width="1"/></svg>
<svg class="a" style="left:726px;top:354px" width="16" height="16" viewBox="0 0 16 16"><path d="M2 1 L5 4 M14 1 L11 4 M0 7.5 H3 M13 7.5 H16 M2 15.2 L4.6 12.9 M14 15.2 L11.4 12.9" stroke="#000" stroke-width="1"/><path d="M8 3.6 C5.6 3.6 5.2 5.6 5.2 7.6 C5.2 9.6 4.7 10.6 3.5 11.7 H12.5 C11.3 10.6 10.8 9.6 10.8 7.6 C10.8 5.6 10.4 3.6 8 3.6 Z" fill="#ffff50"/><rect x="7.4" y="2.4" width="1.2" height="2" fill="#000"/><rect x="3" y="11.6" width="10" height="1.1" fill="#000"/><rect x="6.8" y="12.7" width="2.4" height="1.3" fill="#000"/></svg>
<div class="a chk" style="left:670px;top:373px"><svg width="11" height="11" style="display:block"><path d="M2 4.5 L4.5 7 L9 2.5" fill="none" stroke="#21a121" stroke-width="2.2"/></svg></div>
<div class="a chk" style="left:698px;top:373px"><svg width="11" height="11" style="display:block"><path d="M2 4.5 L4.5 7 L9 2.5" fill="none" stroke="#21a121" stroke-width="2.2"/></svg></div>
<div class="a chk" style="left:726px;top:373px"></div>
<div class="a grp" style="left:36px;top:398px;width:137px;height:58px"></div>
<div class="a gt" style="left:41px;top:391px;background:#f6f6f2">MPX Level [kHz]</div>
<div class="a" style="left:43px;top:411px;line-height:13px;">Min</div>
<div class="a" style="left:43px;top:435px;line-height:13px;">Max</div>
<div class="a spn" style="left:68px;top:407px;width:57px;height:21px"><div class="v">10</div><div class="u"><svg width="15" height="7" style="display:block"><path d="M4 5.6 L7.5 2.4 L11 5.6" fill="none" stroke="#43577c" stroke-width="2.1"/></svg></div><div class="d"><svg width="15" height="7" style="display:block"><path d="M4 1.4 L7.5 4.6 L11 1.4" fill="none" stroke="#43577c" stroke-width="2.1"/></svg></div></div>
<div class="a cmb" style="left:124px;top:407px;width:41px;height:21px"><div class="v">Off</div><div class="dd"><svg width="15" height="17" style="display:block"><path d="M3.5 6.3 L7.5 10.3 L11.5 6.3" fill="none" stroke="#4d6185" stroke-width="2.2"/></svg></div></div>
<div class="a spn" style="left:68px;top:431px;width:57px;height:21px"><div class="v">90</div><div class="u"><svg width="15" height="7" style="display:block"><path d="M4 5.6 L7.5 2.4 L11 5.6" fill="none" stroke="#43577c" stroke-width="2.1"/></svg></div><div class="d"><svg width="15" height="7" style="display:block"><path d="M4 1.4 L7.5 4.6 L11 1.4" fill="none" stroke="#43577c" stroke-width="2.1"/></svg></div></div>
<div class="a cmb" style="left:124px;top:431px;width:41px;height:21px"><div class="v">Off</div><div class="dd"><svg width="15" height="17" style="display:block"><path d="M3.5 6.3 L7.5 10.3 L11.5 6.3" fill="none" stroke="#4d6185" stroke-width="2.2"/></svg></div></div>
<div class="a grp" style="left:180px;top:398px;width:137px;height:58px"></div>
<div class="a gt" style="left:185px;top:391px;background:#f6f6f2">RF Level [dBµV]</div>
<div class="a" style="left:187px;top:411px;line-height:13px;">Min</div>
<div class="a" style="left:187px;top:435px;line-height:13px;">Max</div>
<div class="a spn" style="left:212px;top:407px;width:57px;height:21px"><div class="v">60</div><div class="u"><svg width="15" height="7" style="display:block"><path d="M4 5.6 L7.5 2.4 L11 5.6" fill="none" stroke="#43577c" stroke-width="2.1"/></svg></div><div class="d"><svg width="15" height="7" style="display:block"><path d="M4 1.4 L7.5 4.6 L11 1.4" fill="none" stroke="#43577c" stroke-width="2.1"/></svg></div></div>
<div class="a cmb" style="left:268px;top:407px;width:41px;height:21px"><div class="v">On</div><div class="dd"><svg width="15" height="17" style="display:block"><path d="M3.5 6.3 L7.5 10.3 L11.5 6.3" fill="none" stroke="#4d6185" stroke-width="2.2"/></svg></div></div>
<div class="a spn" style="left:212px;top:431px;width:57px;height:21px"><div class="v">70</div><div class="u"><svg width="15" height="7" style="display:block"><path d="M4 5.6 L7.5 2.4 L11 5.6" fill="none" stroke="#43577c" stroke-width="2.1"/></svg></div><div class="d"><svg width="15" height="7" style="display:block"><path d="M4 1.4 L7.5 4.6 L11 1.4" fill="none" stroke="#43577c" stroke-width="2.1"/></svg></div></div>
<div class="a cmb" style="left:268px;top:431px;width:41px;height:21px"><div class="v">Off</div><div class="dd"><svg width="15" height="17" style="display:block"><path d="M3.5 6.3 L7.5 10.3 L11.5 6.3" fill="none" stroke="#4d6185" stroke-width="2.2"/></svg></div></div>
<div class="a grp" style="left:324px;top:398px;width:137px;height:58px"></div>
<div class="a gt" style="left:329px;top:391px;background:#f6f6f2">PILOT Level [kHz]</div>
<div class="a" style="left:331px;top:411px;line-height:13px;">Min</div>
<div class="a" style="left:331px;top:435px;line-height:13px;">Max</div>
<div class="a spn" style="left:356px;top:407px;width:57px;height:21px"><div class="v">5</div><div class="u"><svg width="15" height="7" style="display:block"><path d="M4 5.6 L7.5 2.4 L11 5.6" fill="none" stroke="#43577c" stroke-width="2.1"/></svg></div><div class="d"><svg width="15" height="7" style="display:block"><path d="M4 1.4 L7.5 4.6 L11 1.4" fill="none" stroke="#43577c" stroke-width="2.1"/></svg></div></div>
<div class="a cmb" style="left:412px;top:407px;width:41px;height:21px"><div class="v">Off</div><div class="dd"><svg width="15" height="17" style="display:block"><path d="M3.5 6.3 L7.5 10.3 L11.5 6.3" fill="none" stroke="#4d6185" stroke-width="2.2"/></svg></div></div>
<div class="a spn" style="left:356px;top:431px;width:57px;height:21px"><div class="v">10</div><div class="u"><svg width="15" height="7" style="display:block"><path d="M4 5.6 L7.5 2.4 L11 5.6" fill="none" stroke="#43577c" stroke-width="2.1"/></svg></div><div class="d"><svg width="15" height="7" style="display:block"><path d="M4 1.4 L7.5 4.6 L11 1.4" fill="none" stroke="#43577c" stroke-width="2.1"/></svg></div></div>
<div class="a cmb" style="left:412px;top:431px;width:41px;height:21px"><div class="v">Off</div><div class="dd"><svg width="15" height="17" style="display:block"><path d="M3.5 6.3 L7.5 10.3 L11.5 6.3" fill="none" stroke="#4d6185" stroke-width="2.2"/></svg></div></div>
<div class="a grp" style="left:468px;top:398px;width:137px;height:58px"></div>
<div class="a gt" style="left:473px;top:391px;background:#f6f6f2">RDS Level [kHz]</div>
<div class="a" style="left:475px;top:411px;line-height:13px;">Min</div>
<div class="a" style="left:475px;top:435px;line-height:13px;">Max</div>
<div class="a spn" style="left:500px;top:407px;width:57px;height:21px"><div class="v">2</div><div class="u"><svg width="15" height="7" style="display:block"><path d="M4 5.6 L7.5 2.4 L11 5.6" fill="none" stroke="#43577c" stroke-width="2.1"/></svg></div><div class="d"><svg width="15" height="7" style="display:block"><path d="M4 1.4 L7.5 4.6 L11 1.4" fill="none" stroke="#43577c" stroke-width="2.1"/></svg></div></div>
<div class="a cmb" style="left:556px;top:407px;width:41px;height:21px"><div class="v">Off</div><div class="dd"><svg width="15" height="17" style="display:block"><path d="M3.5 6.3 L7.5 10.3 L11.5 6.3" fill="none" stroke="#4d6185" stroke-width="2.2"/></svg></div></div>
<div class="a spn" style="left:500px;top:431px;width:57px;height:21px"><div class="v">8</div><div class="u"><svg width="15" height="7" style="display:block"><path d="M4 5.6 L7.5 2.4 L11 5.6" fill="none" stroke="#43577c" stroke-width="2.1"/></svg></div><div class="d"><svg width="15" height="7" style="display:block"><path d="M4 1.4 L7.5 4.6 L11 1.4" fill="none" stroke="#43577c" stroke-width="2.1"/></svg></div></div>
<div class="a cmb" style="left:556px;top:431px;width:41px;height:21px"><div class="v">Off</div><div class="dd"><svg width="15" height="17" style="display:block"><path d="M3.5 6.3 L7.5 10.3 L11.5 6.3" fill="none" stroke="#4d6185" stroke-width="2.2"/></svg></div></div>
<div class="a grp" style="left:612px;top:398px;width:137px;height:58px"></div>
<div class="a gt" style="left:617px;top:391px;background:#f6f6f2">L/R Level [dB]</div>
<div class="a" style="left:619px;top:411px;line-height:13px;">Min</div>
<div class="a" style="left:619px;top:435px;line-height:13px;">Max</div>
<div class="a spn" style="left:644px;top:407px;width:57px;height:21px"><div class="v">-30</div><div class="u"><svg width="15" height="7" style="display:block"><path d="M4 5.6 L7.5 2.4 L11 5.6" fill="none" stroke="#43577c" stroke-width="2.1"/></svg></div><div class="d"><svg width="15" height="7" style="display:block"><path d="M4 1.4 L7.5 4.6 L11 1.4" fill="none" stroke="#43577c" stroke-width="2.1"/></svg></div></div>
<div class="a cmb" style="left:700px;top:407px;width:41px;height:21px"><div class="v">On</div><div class="dd"><svg width="15" height="17" style="display:block"><path d="M3.5 6.3 L7.5 10.3 L11.5 6.3" fill="none" stroke="#4d6185" stroke-width="2.2"/></svg></div></div>
<div class="a spn" style="left:644px;top:431px;width:57px;height:21px"><div class="v">2</div><div class="u"><svg width="15" height="7" style="display:block"><path d="M4 5.6 L7.5 2.4 L11 5.6" fill="none" stroke="#43577c" stroke-width="2.1"/></svg></div><div class="d"><svg width="15" height="7" style="display:block"><path d="M4 1.4 L7.5 4.6 L11 1.4" fill="none" stroke="#43577c" stroke-width="2.1"/></svg></div></div>
<div class="a cmb" style="left:700px;top:431px;width:41px;height:21px"><div class="v">Off</div><div class="dd"><svg width="15" height="17" style="display:block"><path d="M3.5 6.3 L7.5 10.3 L11.5 6.3" fill="none" stroke="#4d6185" stroke-width="2.2"/></svg></div></div>
<div class="a" style="left:28px;top:475px;line-height:13px;letter-spacing:.1px">Auto Save After: 04:29</div>
<div class="a btn" style="left:613px;top:471px;width:143px;height:23px;line-height:21px">Upload Changes</div>
<div class="a" style="left:12px;top:507px;width:182px;height:51px;background:#000"></div>
<svg width="0" height="0" style="position:absolute"><defs><clipPath id="dg"><rect x="0" y="0" width="21.4" height="38.7" rx="2.4"/></clipPath></defs></svg>
<svg class="a" style="left:17.2px;top:512.8px" width="27" height="39" viewBox="0 0 27 39"><g transform="translate(3.7,0.1) skewX(-5.3)" clip-path="url(#dg)"><polygon points="0.00,0.00 21.40,0.00 16.00,5.40 5.40,5.40" fill="#0a520a"/><polygon points="0.00,38.70 21.40,38.70 16.00,33.30 5.40,33.30" fill="#0a520a"/><polygon points="0.00,0.00 5.40,5.40 5.40,16.65 2.70,19.35 0.00,19.35" fill="#0a520a"/><polygon points="0.00,38.70 5.40,33.30 5.40,22.05 2.70,19.35 0.00,19.35" fill="#0a520a"/><polygon points="21.40,0.00 16.00,5.40 16.00,16.65 18.70,19.35 21.40,19.35" fill="#0a520a"/><polygon points="21.40,38.70 16.00,33.30 16.00,22.05 18.70,19.35 21.40,19.35" fill="#0a520a"/><polygon points="2.70,19.35 5.40,16.65 16.00,16.65 18.70,19.35 16.00,22.05 5.40,22.05" fill="#0a520a"/><path fill="none" stroke="#000" stroke-width=".85" d="M0 0 L5.4 5.4 M21.4 0 L15.999999999999998 5.4 M0 38.7 L5.4 33.300000000000004 M21.4 38.7 L15.999999999999998 33.300000000000004 M0 19.35 L2.7 19.35 L5.4 16.650000000000002 M2.7 19.35 L5.4 22.05 M21.4 19.35 L18.7 19.35 L15.999999999999998 16.650000000000002 M18.7 19.35 L15.999999999999998 22.05"/></g></svg>
<svg class="a" style="left:43.1px;top:512.8px" width="27" height="39" viewBox="0 0 27 39"><g transform="translate(3.7,0.1) skewX(-5.3)" clip-path="url(#dg)"><polygon points="0.00,0.00 21.40,0.00 16.00,5.40 5.40,5.40" fill="#19ff19"/><polygon points="0.00,38.70 21.40,38.70 16.00,33.30 5.40,33.30" fill="#19ff19"/><polygon points="0.00,0.00 5.40,5.40 5.40,16.65 2.70,19.35 0.00,19.35" fill="#19ff19"/><polygon points="0.00,38.70 5.40,33.30 5.40,22.05 2.70,19.35 0.00,19.35" fill="#0a520a"/><polygon points="21.40,0.00 16.00,5.40 16.00,16.65 18.70,19.35 21.40,19.35" fill="#19ff19"/><polygon points="21.40,38.70 16.00,33.30 16.00,22.05 18.70,19.35 21.40,19.35" fill="#19ff19"/><polygon points="2.70,19.35 5.40,16.65 16.00,16.65 18.70,19.35 16.00,22.05 5.40,22.05" fill="#19ff19"/><path fill="none" stroke="#000" stroke-width=".85" d="M0 0 L5.4 5.4 M21.4 0 L15.999999999999998 5.4 M0 38.7 L5.4 33.300000000000004 M21.4 38.7 L15.999999999999998 33.300000000000004 M0 19.35 L2.7 19.35 L5.4 16.650000000000002 M2.7 19.35 L5.4 22.05 M21.4 19.35 L18.7 19.35 L15.999999999999998 16.650000000000002 M18.7 19.35 L15.999999999999998 22.05"/></g></svg>
<svg class="a" style="left:69.0px;top:512.8px" width="27" height="39" viewBox="0 0 27 39"><g transform="translate(3.7,0.1) skewX(-5.3)" clip-path="url(#dg)"><polygon points="0.00,0.00 21.40,0.00 16.00,5.40 5.40,5.40" fill="#19ff19"/><polygon points="0.00,38.70 21.40,38.70 16.00,33.30 5.40,33.30" fill="#19ff19"/><polygon points="0.00,0.00 5.40,5.40 5.40,16.65 2.70,19.35 0.00,19.35" fill="#19ff19"/><polygon points="0.00,38.70 5.40,33.30 5.40,22.05 2.70,19.35 0.00,19.35" fill="#0a520a"/><polygon points="21.40,0.00 16.00,5.40 16.00,16.65 18.70,19.35 21.40,19.35" fill="#19ff19"/><polygon points="21.40,38.70 16.00,33.30 16.00,22.05 18.70,19.35 21.40,19.35" fill="#19ff19"/><polygon points="2.70,19.35 5.40,16.65 16.00,16.65 18.70,19.35 16.00,22.05 5.40,22.05" fill="#19ff19"/><path fill="none" stroke="#000" stroke-width=".85" d="M0 0 L5.4 5.4 M21.4 0 L15.999999999999998 5.4 M0 38.7 L5.4 33.300000000000004 M21.4 38.7 L15.999999999999998 33.300000000000004 M0 19.35 L2.7 19.35 L5.4 16.650000000000002 M2.7 19.35 L5.4 22.05 M21.4 19.35 L18.7 19.35 L15.999999999999998 16.650000000000002 M18.7 19.35 L15.999999999999998 22.05"/></g></svg>
<svg class="a" style="left:102.8px;top:512.8px" width="27" height="39" viewBox="0 0 27 39"><g transform="translate(3.7,0.1) skewX(-5.3)" clip-path="url(#dg)"><polygon points="0.00,0.00 21.40,0.00 16.00,5.40 5.40,5.40" fill="#19ff19"/><polygon points="0.00,38.70 21.40,38.70 16.00,33.30 5.40,33.30" fill="#19ff19"/><polygon points="0.00,0.00 5.40,5.40 5.40,16.65 2.70,19.35 0.00,19.35" fill="#19ff19"/><polygon points="0.00,38.70 5.40,33.30 5.40,22.05 2.70,19.35 0.00,19.35" fill="#0a520a"/><polygon points="21.40,0.00 16.00,5.40 16.00,16.65 18.70,19.35 21.40,19.35" fill="#19ff19"/><polygon points="21.40,38.70 16.00,33.30 16.00,22.05 18.70,19.35 21.40,19.35" fill="#19ff19"/><polygon points="2.70,19.35 5.40,16.65 16.00,16.65 18.70,19.35 16.00,22.05 5.40,22.05" fill="#19ff19"/><path fill="none" stroke="#000" stroke-width=".85" d="M0 0 L5.4 5.4 M21.4 0 L15.999999999999998 5.4 M0 38.7 L5.4 33.300000000000004 M21.4 38.7 L15.999999999999998 33.300000000000004 M0 19.35 L2.7 19.35 L5.4 16.650000000000002 M2.7 19.35 L5.4 22.05 M21.4 19.35 L18.7 19.35 L15.999999999999998 16.650000000000002 M18.7 19.35 L15.999999999999998 22.05"/></g></svg>
<svg class="a" style="left:128.6px;top:512.8px" width="27" height="39" viewBox="0 0 27 39"><g transform="translate(3.7,0.1) skewX(-5.3)" clip-path="url(#dg)"><polygon points="0.00,0.00 21.40,0.00 16.00,5.40 5.40,5.40" fill="#19ff19"/><polygon points="0.00,38.70 21.40,38.70 16.00,33.30 5.40,33.30" fill="#19ff19"/><polygon points="0.00,0.00 5.40,5.40 5.40,16.65 2.70,19.35 0.00,19.35" fill="#19ff19"/><polygon points="0.00,38.70 5.40,33.30 5.40,22.05 2.70,19.35 0.00,19.35" fill="#19ff19"/><polygon points="21.40,0.00 16.00,5.40 16.00,16.65 18.70,19.35 21.40,19.35" fill="#19ff19"/><polygon points="21.40,38.70 16.00,33.30 16.00,22.05 18.70,19.35 21.40,19.35" fill="#19ff19"/><polygon points="2.70,19.35 5.40,16.65 16.00,16.65 18.70,19.35 16.00,22.05 5.40,22.05" fill="#0a520a"/><path fill="none" stroke="#000" stroke-width=".85" d="M0 0 L5.4 5.4 M21.4 0 L15.999999999999998 5.4 M0 38.7 L5.4 33.300000000000004 M21.4 38.7 L15.999999999999998 33.300000000000004 M0 19.35 L2.7 19.35 L5.4 16.650000000000002 M2.7 19.35 L5.4 22.05 M21.4 19.35 L18.7 19.35 L15.999999999999998 16.650000000000002 M18.7 19.35 L15.999999999999998 22.05"/></g></svg>
<svg class="a" style="left:93.5px;top:545px" width="8" height="8"><polygon points="2,1 7,1 6.4,6.8 1.4,6.8" fill="#1cff1c"/></svg>
<svg class="a" style="left:158px;top:511px" width="32" height="43" viewBox="0 0 32 43"><circle cx="11.3" cy="10" r="7.1" fill="none" stroke="#1cff1c" stroke-width="2"/><circle cx="20.4" cy="10" r="7.1" fill="none" stroke="#1cff1c" stroke-width="2"/><g fill="none" stroke="#1cff1c"><circle cx="9" cy="31.3" r="6.3" stroke-width="5.2"/><circle cx="21" cy="31.3" r="6.3" stroke-width="5.2"/><path d="M20 25 C13 25 17 37.6 10 37.6" stroke="#000" stroke-width="6.6"/><path d="M21.5 24.6 C12.5 24.6 17.5 38 8.5 38" stroke-width="4"/></g><g fill="none" stroke="#0a6a0a" stroke-width=".6"><circle cx="9" cy="31.3" r="5.4"/><circle cx="9" cy="31.3" r="7.2"/><circle cx="21" cy="31.3" r="5.4"/><circle cx="21" cy="31.3" r="7.2"/></g><circle cx="9" cy="31.3" r="1.3" fill="#1cff1c"/><circle cx="21" cy="31.3" r="1.3" fill="#1cff1c"/></svg>
<div class="a" style="left:12px;top:562px;width:55px;text-align:right;font-size:11px;line-height:13px;letter-spacing:-.2px">RF Level:</div>
<div class="a" style="left:6px;top:575px;width:61px;text-align:right;font-size:11px;line-height:13px;letter-spacing:-.2px">MPX Level:</div>
<div class="a" style="left:73px;top:562px;width:206px;height:11px;background:#000"></div><div class="a" style="left:74px;top:563px;width:4px;height:9px;background:#f80808"></div><div class="a" style="left:79px;top:563px;width:4px;height:9px;background:#f80808"></div><div class="a" style="left:84px;top:563px;width:4px;height:9px;background:#f80808"></div><div class="a" style="left:89px;top:563px;width:4px;height:9px;background:#f80808"></div><div class="a" style="left:94px;top:563px;width:4px;height:9px;background:#f80808"></div><div class="a" style="left:99px;top:563px;width:4px;height:9px;background:#f80808"></div><div class="a" style="left:104px;top:563px;width:4px;height:9px;background:#f80808"></div><div class="a" style="left:109px;top:563px;width:4px;height:9px;background:#f80808"></div><div class="a" style="left:114px;top:563px;width:4px;height:9px;background:#f80808"></div><div class="a" style="left:119px;top:563px;width:4px;height:9px;background:#00f800"></div><div class="a" style="left:124px;top:563px;width:4px;height:9px;background:#00f800"></div><div class="a" style="left:129px;top:563px;width:4px;height:9px;background:#00f800"></div><div class="a" style="left:134px;top:563px;width:4px;height:9px;background:#00f800"></div><div class="a" style="left:139px;top:563px;width:4px;height:9px;background:#00f800"></div><div class="a" style="left:144px;top:563px;width:4px;height:9px;background:#00f800"></div><div class="a" style="left:149px;top:563px;width:4px;height:9px;background:#00f800"></div><div class="a" style="left:154px;top:563px;width:4px;height:9px;background:#00f800"></div><div class="a" style="left:159px;top:563px;width:4px;height:9px;background:#00f800"></div><div class="a" style="left:164px;top:563px;width:4px;height:9px;background:#00f800"></div><div class="a" style="left:169px;top:563px;width:4px;height:9px;background:#00f800"></div><div class="a" style="left:174px;top:563px;width:4px;height:9px;background:#00f800"></div><div class="a" style="left:179px;top:563px;width:4px;height:9px;background:#00f800"></div><div class="a" style="left:184px;top:563px;width:4px;height:9px;background:#00f800"></div><div class="a" style="left:189px;top:563px;width:4px;height:9px;background:#00f800"></div><div class="a" style="left:194px;top:563px;width:4px;height:9px;background:#00f800"></div><div class="a" style="left:199px;top:563px;width:4px;height:9px;background:#00f800"></div><div class="a" style="left:204px;top:563px;width:4px;height:9px;background:#00f800"></div><div class="a" style="left:209px;top:563px;width:4px;height:9px;background:#00f800"></div><div class="a" style="left:214px;top:563px;width:4px;height:9px;background:#00f800"></div><div class="a" style="left:219px;top:563px;width:4px;height:9px;background:#00f800"></div><div class="a" style="left:224px;top:563px;width:4px;height:9px;background:#00f800"></div><div class="a" style="left:229px;top:563px;width:4px;height:9px;background:#00f800"></div><div class="a" style="left:234px;top:563px;width:4px;height:9px;background:#00f800"></div><div class="a" style="left:239px;top:563px;width:4px;height:9px;background:#00f800"></div><div class="a" style="left:244px;top:563px;width:4px;height:9px;background:#0a8a0a"></div><div class="a" style="left:249px;top:563px;width:4px;height:9px;background:#0a8a0a"></div><div class="a" style="left:254px;top:563px;width:4px;height:9px;background:#0a8a0a"></div><div class="a" style="left:259px;top:563px;width:4px;height:9px;background:#0a8a0a"></div><div class="a" style="left:264px;top:563px;width:4px;height:9px;background:#0a8a0a"></div><div class="a" style="left:269px;top:563px;width:4px;height:9px;background:#0a8a0a"></div><div class="a" style="left:274px;top:563px;width:4px;height:9px;background:#0a8a0a"></div>
<div class="a" style="left:73px;top:575px;width:206px;height:11px;background:#000"></div><div class="a" style="left:74px;top:576px;width:4px;height:9px;background:#00f800"></div><div class="a" style="left:79px;top:576px;width:4px;height:9px;background:#00f800"></div><div class="a" style="left:84px;top:576px;width:4px;height:9px;background:#00f800"></div><div class="a" style="left:89px;top:576px;width:4px;height:9px;background:#00f800"></div><div class="a" style="left:94px;top:576px;width:4px;height:9px;background:#00f800"></div><div class="a" style="left:99px;top:576px;width:4px;height:9px;background:#00f800"></div><div class="a" style="left:104px;top:576px;width:4px;height:9px;background:#00f800"></div><div class="a" style="left:109px;top:576px;width:4px;height:9px;background:#00f800"></div><div class="a" style="left:114px;top:576px;width:4px;height:9px;background:#00f800"></div><div class="a" style="left:119px;top:576px;width:4px;height:9px;background:#00f800"></div><div class="a" style="left:124px;top:576px;width:4px;height:9px;background:#00f800"></div><div class="a" style="left:129px;top:576px;width:4px;height:9px;background:#00f800"></div><div class="a" style="left:134px;top:576px;width:4px;height:9px;background:#00f800"></div><div class="a" style="left:139px;top:576px;width:4px;height:9px;background:#00f800"></div><div class="a" style="left:144px;top:576px;width:4px;height:9px;background:#00f800"></div><div class="a" style="left:149px;top:576px;width:4px;height:9px;background:#00f800"></div><div class="a" style="left:154px;top:576px;width:4px;height:9px;background:#00f800"></div><div class="a" style="left:159px;top:576px;width:4px;height:9px;background:#00f800"></div><div class="a" style="left:164px;top:576px;width:4px;height:9px;background:#00f800"></div><div class="a" style="left:169px;top:576px;width:4px;height:9px;background:#00f800"></div><div class="a" style="left:174px;top:576px;width:4px;height:9px;background:#00f800"></div><div class="a" style="left:179px;top:576px;width:4px;height:9px;background:#00f800"></div><div class="a" style="left:184px;top:576px;width:4px;height:9px;background:#00f800"></div><div class="a" style="left:189px;top:576px;width:4px;height:9px;background:#00f800"></div><div class="a" style="left:194px;top:576px;width:4px;height:9px;background:#00f800"></div><div class="a" style="left:199px;top:576px;width:4px;height:9px;background:#00f800"></div><div class="a" style="left:204px;top:576px;width:4px;height:9px;background:#00f800"></div><div class="a" style="left:209px;top:576px;width:4px;height:9px;background:#00f800"></div><div class="a" style="left:214px;top:576px;width:4px;height:9px;background:#00f800"></div><div class="a" style="left:219px;top:576px;width:4px;height:9px;background:#00f800"></div><div class="a" style="left:224px;top:576px;width:4px;height:9px;background:#00f800"></div><div class="a" style="left:229px;top:576px;width:4px;height:9px;background:#00f800"></div><div class="a" style="left:234px;top:576px;width:4px;height:9px;background:#00f800"></div><div class="a" style="left:239px;top:576px;width:4px;height:9px;background:#00f800"></div><div class="a" style="left:244px;top:576px;width:4px;height:9px;background:#8c8c10"></div><div class="a" style="left:249px;top:576px;width:4px;height:9px;background:#8c8c10"></div><div class="a" style="left:254px;top:576px;width:4px;height:9px;background:#7a0606"></div><div class="a" style="left:259px;top:576px;width:4px;height:9px;background:#7a0606"></div><div class="a" style="left:264px;top:576px;width:4px;height:9px;background:#7a0606"></div><div class="a" style="left:269px;top:576px;width:4px;height:9px;background:#7a0606"></div><div class="a" style="left:274px;top:576px;width:4px;height:9px;background:#7a0606"></div>
<div class="a fld" style="left:200px;top:508px;width:79px;height:21px;text-align:right;padding-right:7px;line-height:19px">87.00</div>
<div class="a btn" style="left:201px;top:535px;width:77px;height:23px;line-height:22px;letter-spacing:-1px;padding-right:3px">SET</div>
<svg width="0" height="0" style="position:absolute"><defs><linearGradient id="fl" x1="0" y1="0" x2="1" y2="0"><stop offset="0" stop-color="#7ea2ee"/><stop offset=".35" stop-color="#4a78dc"/><stop offset="1" stop-color="#3f6ad2"/></linearGradient></defs></svg>
<div class="a btn" style="left:285px;top:508px;width:22px;height:23px"><svg width="20" height="21" style="display:block"><path d="M2.5 3.5 H17.5 V18.5 H4.5 L2.5 16.5 Z" fill="url(#fl)" stroke="#2a48a8" stroke-width="1"/><rect x="5.5" y="4" width="9" height="6.5" fill="#fff" opacity=".55"/><rect x="6.5" y="5" width="7" height="4" fill="#d2d2d2"/><rect x="6" y="12" width="8.5" height="6.5" fill="#3c3c3c"/><rect x="7" y="13" width="6.5" height="4.5" fill="#a0a8b8"/><rect x="8" y="13.5" width="2" height="3.5" fill="#2858c8"/></svg></div>
<div class="a btn" style="left:308px;top:508px;width:113px;height:23px;line-height:23px;color:#1a1a1a;text-align:left;padding-left:9px;font-family:'Liberation Mono',monospace;font-size:11.6px;letter-spacing:0">87.00</div>
<div class="a btn" style="left:427px;top:508px;width:22px;height:23px"><svg width="20" height="21" style="display:block"><path d="M2.5 3.5 H17.5 V18.5 H4.5 L2.5 16.5 Z" fill="url(#fl)" stroke="#2a48a8" stroke-width="1"/><rect x="5.5" y="4" width="9" height="6.5" fill="#fff" opacity=".55"/><rect x="6.5" y="5" width="7" height="4" fill="#d2d2d2"/><rect x="6" y="12" width="8.5" height="6.5" fill="#3c3c3c"/><rect x="7" y="13" width="6.5" height="4.5" fill="#a0a8b8"/><rect x="8" y="13.5" width="2" height="3.5" fill="#2858c8"/></svg></div>
<div class="a btn" style="left:450px;top:508px;width:113px;height:23px;line-height:23px;color:#1a1a1a;text-align:left;padding-left:9px;font-family:'Liberation Mono',monospace;font-size:11.6px;letter-spacing:0">87.00</div>
<div class="a btn" style="left:285px;top:535px;width:22px;height:23px"><svg width="20" height="21" style="display:block"><path d="M2.5 3.5 H17.5 V18.5 H4.5 L2.5 16.5 Z" fill="url(#fl)" stroke="#2a48a8" stroke-width="1"/><rect x="5.5" y="4" width="9" height="6.5" fill="#fff" opacity=".55"/><rect x="6.5" y="5" width="7" height="4" fill="#d2d2d2"/><rect x="6" y="12" width="8.5" height="6.5" fill="#3c3c3c"/><rect x="7" y="13" width="6.5" height="4.5" fill="#a0a8b8"/><rect x="8" y="13.5" width="2" height="3.5" fill="#2858c8"/></svg></div>
<div class="a btn" style="left:308px;top:535px;width:113px;height:23px;line-height:23px;color:#1a1a1a;text-align:left;padding-left:9px;font-family:'Liberation Mono',monospace;font-size:11.6px;letter-spacing:0">87.00</div>
<div class="a btn" style="left:427px;top:535px;width:22px;height:23px"><svg width="20" height="21" style="display:block"><path d="M2.5 3.5 H17.5 V18.5 H4.5 L2.5 16.5 Z" fill="url(#fl)" stroke="#2a48a8" stroke-width="1"/><rect x="5.5" y="4" width="9" height="6.5" fill="#fff" opacity=".55"/><rect x="6.5" y="5" width="7" height="4" fill="#d2d2d2"/><rect x="6" y="12" width="8.5" height="6.5" fill="#3c3c3c"/><rect x="7" y="13" width="6.5" height="4.5" fill="#a0a8b8"/><rect x="8" y="13.5" width="2" height="3.5" fill="#2858c8"/></svg></div>
<div class="a btn" style="left:450px;top:535px;width:113px;height:23px;line-height:23px;color:#1a1a1a;text-align:left;padding-left:9px;font-family:'Liberation Mono',monospace;font-size:11.6px;letter-spacing:0">87.00</div>
<div class="a btn" style="left:285px;top:563px;width:22px;height:23px"><svg width="20" height="21" style="display:block"><path d="M2.5 3.5 H17.5 V18.5 H4.5 L2.5 16.5 Z" fill="url(#fl)" stroke="#2a48a8" stroke-width="1"/><rect x="5.5" y="4" width="9" height="6.5" fill="#fff" opacity=".55"/><rect x="6.5" y="5" width="7" height="4" fill="#d2d2d2"/><rect x="6" y="12" width="8.5" height="6.5" fill="#3c3c3c"/><rect x="7" y="13" width="6.5" height="4.5" fill="#a0a8b8"/><rect x="8" y="13.5" width="2" height="3.5" fill="#2858c8"/></svg></div>
<div class="a btn" style="left:308px;top:563px;width:113px;height:23px;line-height:23px;color:#1a1a1a;text-align:left;padding-left:9px;font-family:'Liberation Mono',monospace;font-size:11.6px;letter-spacing:0">87.00</div>
<div class="a btn" style="left:427px;top:563px;width:22px;height:23px"><svg width="20" height="21" style="display:block"><path d="M2.5 3.5 H17.5 V18.5 H4.5 L2.5 16.5 Z" fill="url(#fl)" stroke="#2a48a8" stroke-width="1"/><rect x="5.5" y="4" width="9" height="6.5" fill="#fff" opacity=".55"/><rect x="6.5" y="5" width="7" height="4" fill="#d2d2d2"/><rect x="6" y="12" width="8.5" height="6.5" fill="#3c3c3c"/><rect x="7" y="13" width="6.5" height="4.5" fill="#a0a8b8"/><rect x="8" y="13.5" width="2" height="3.5" fill="#2858c8"/></svg></div>
<div class="a btn" style="left:450px;top:563px;width:113px;height:23px;line-height:23px;color:#1a1a1a;text-align:left;padding-left:9px;font-family:'Liberation Mono',monospace;font-size:11.6px;letter-spacing:0">87.00</div>
<div class="a btn" style="left:569px;top:508px;width:98px;height:23px;line-height:22px;text-align:left;padding-left:27px"><div class="a" style="left:6px;top:2px;width:16px;height:16px"><svg width="16" height="17" style="display:block;margin-top:-1px"><g stroke="#1e78ff" stroke-width="1" fill="none"><path d="M7.5 0.5 V16.5 M1.5 4.5 L13.5 12.5 M13.5 4.5 L1.5 12.5"/><path d="M5 2 L7.5 4.5 L10 2 M5 15 L7.5 12.5 L10 15 M1 7.5 L4 6.2 L3.5 3 M14 7.5 L11 6.2 L11.5 3 M1 9.5 L4 10.8 L3.5 14 M14 9.5 L11 10.8 L11.5 14"/></g></svg></div>Freeze</div>
<div class="a btn dis" style="left:673px;top:508px;width:98px;height:23px;line-height:22px;text-align:left;padding-left:27px"><div class="a" style="left:6px;top:2px;width:16px;height:16px"><svg width="16" height="17" style="display:block;margin-top:-1px"><path d="M1 6 H4 L8.5 1 V16 L4 11 H1 Z" fill="#111"/><path d="M6 4.5 V12.5" stroke="#777" stroke-width="1"/><path d="M10.5 4.5 C12 6.5 12 10.5 10.5 12.5 M12.8 3 C15 6 15 11 12.8 14" fill="none" stroke="#111" stroke-width="1.2"/></svg></div>Listen</div>
<div class="a btn" style="left:569px;top:535px;width:98px;height:23px;line-height:22px;text-align:left;padding-left:27px"><div class="a" style="left:6px;top:2px;width:16px;height:16px"><svg width="17" height="16" style="display:block"><path d="M4.5 7 V0.5 H11.5 V7" fill="#eef4ff" stroke="#7a8298"/><path d="M6 2.5 H10 M6 4.5 H10" stroke="#b8c4e0" stroke-width=".8"/><rect x="0.5" y="6.5" width="16" height="7" rx="2" fill="#d4d8e2" stroke="#5a6070"/><path d="M1.5 10.5 H15.5" stroke="#8a90a0" stroke-width=".8"/><rect x="3.5" y="10.5" width="9" height="4.5" fill="#f4f6fa" stroke="#5a6070"/></svg></div>Print</div>
<div class="a btn" style="left:673px;top:535px;width:98px;height:23px;line-height:22px;text-align:left;padding-left:27px"><div class="a" style="left:6px;top:2px;width:16px;height:16px"><svg width="17" height="17" style="display:block"><g transform="translate(8.3 8.3)"><g fill="#8aaae8" stroke="#4a6ab8" stroke-width=".7"><rect x="-1.9" y="-8" width="3.8" height="16"/><rect x="-1.9" y="-8" width="3.8" height="16" transform="rotate(45)"/><rect x="-1.9" y="-8" width="3.8" height="16" transform="rotate(90)"/><rect x="-1.9" y="-8" width="3.8" height="16" transform="rotate(135)"/></g><circle r="5.6" fill="#8aaae8"/><circle r="5.6" fill="none" stroke="#4a6ab8" stroke-width=".5" stroke-dasharray="2.1 2.3" /><rect x="-2.3" y="-2.3" width="4.6" height="4.6" fill="#fff" stroke="#4a6ab8" stroke-width=".7"/></g></svg></div>Settings</div>
<div class="a btn" style="left:569px;top:563px;width:98px;height:23px;line-height:22px;text-align:left;padding-left:27px"><div class="a" style="left:6px;top:2px;width:16px;height:16px"><svg width="16" height="16" style="display:block"><rect x=".5" y=".5" width="15" height="15" fill="#0c2478" stroke="#000"/><path d="M1 1 H8 L6 5 L1 7 Z M10 9 L15 8 V15 H9 Z" fill="#1668dc"/><path d="M10 1 H15 V6 L11 5 Z M1 10 L5 10 L6 15 H1 Z" fill="#2a7a4a"/><path d="M11 1.5 L14.5 1.5 L14.5 4 Z" fill="#c8b030"/><path d="M8 1.5 V14.5 M1.5 8 H14.5" stroke="#fff" stroke-width="1"/><path d="M8 1 L6.5 3.5 H9.5 Z M8 15 L6.5 12.5 H9.5 Z M1 8 L3.5 6.5 V9.5 Z M15 8 L12.5 6.5 V9.5 Z" fill="#fff"/><circle cx="8" cy="8" r="2.6" fill="none" stroke="#fff" stroke-width="1.2"/><circle cx="8" cy="8" r="1.2" fill="#406030"/></svg></div>View Map</div>
<div class="a btn" style="left:673px;top:563px;width:98px;height:23px;line-height:22px;text-align:left;padding-left:27px"><div class="a" style="left:6px;top:2px;width:16px;height:16px"><svg width="16" height="16" style="display:block"><circle cx="8" cy="8" r="7.2" fill="#f6f5f0" stroke="#222" stroke-width="1"/><rect x="5" y="5" width="6" height="6" fill="#7a0000"/></svg></div>Disconnect</div>
<div class="a" style="left:4px;top:592px;width:776px;height:23px;background:#008000;border:1px solid #fff"></div>
<div class="a" style="left:14px;top:598px;color:#fff;font-weight:bold;font-size:11.5px;letter-spacing:.15px;line-height:13px">Connected to Demo Unit 1.</div>
</div></body></html>
